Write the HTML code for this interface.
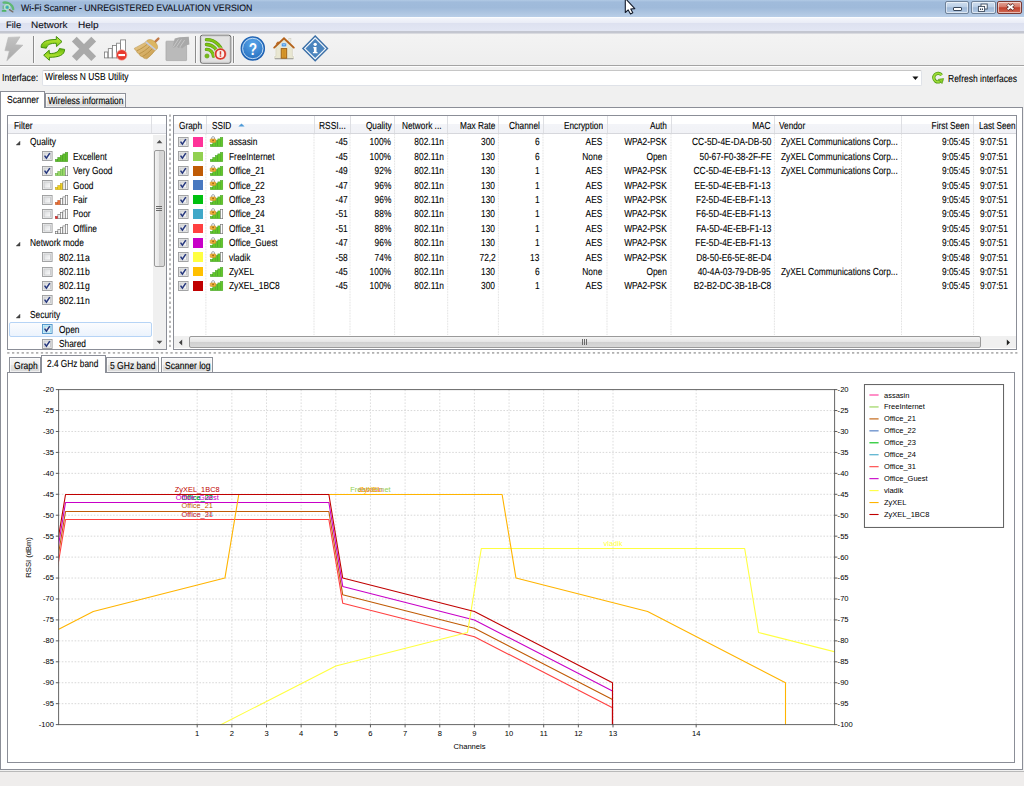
<!DOCTYPE html><html><head><meta charset="utf-8"><title>Wi-Fi Scanner</title><style>
*{box-sizing:border-box;margin:0;padding:0}
html,body{width:1024px;height:786px;overflow:hidden;background:#f0f0f0}
body{position:relative;font-family:"Liberation Sans",sans-serif;font-size:9px;color:#000}
.a{position:absolute}
.t,.tr{-webkit-text-stroke:0.1px currentColor;text-rendering:geometricPrecision}
.t{position:absolute;white-space:pre;line-height:12px;height:12px;transform-origin:0 50%;font-size:9px}
.tr{position:absolute;white-space:pre;line-height:12px;height:12px;transform-origin:100% 50%;font-size:9px;text-align:right}
.c{position:absolute;white-space:pre;line-height:10px;height:10px;font-size:7.5px}
</style></head><body>
<div class="a" style="left:0.00px;top:0.00px;width:1024.00px;height:16.50px;background:linear-gradient(#b2cae5 0%,#a0bbdb 12%,#9fbada 45%,#b9cee7 100%)"></div>
<svg class="a" style="left:1px;top:1px" width="14" height="13" viewBox="0 0 14 13"><path d="M2.6 1.6 C7 1 11.6 3.4 12.2 8.2" fill="none" stroke="#4fb85a" stroke-width="2.3" stroke-linecap="round" opacity=".8"/><path d="M1.6 9.9 h3" stroke="#3fb04e" stroke-width="1.8" stroke-linecap="round" opacity=".85"/><path d="M2.2 4.4 v3.8" stroke="#5ab868" stroke-width="1.3" opacity=".7"/><circle cx="6.2" cy="6.2" r="2.7" fill="#7fd6a0" stroke="#d4ecd8" stroke-width=".9" opacity=".9"/><circle cx="6.2" cy="6.4" r="1.3" fill="#3aa6c0"/><path d="M8.4 8.6 L11.8 10.8" stroke="#7a7068" stroke-width="1.5" stroke-linecap="round"/></svg>
<div class="t" style="left:20.60px;top:2.40px;transform:scaleX(0.936);font-size:9.37px;color:#0b0b14;">Wi-Fi Scanner - UNREGISTERED EVALUATION VERSION</div>
<div class="a" style="left:945.40px;top:1.40px;width:24.00px;height:12.20px;background:linear-gradient(#cfdeef 0%,#bbcfe6 45%,#9fb9d8 52%,#b4cae4 100%);border:.8px solid #6f8299;border-radius:2px;box-shadow:inset 0 0 0 1px rgba(255,255,255,.55)"></div>
<div class="a" style="left:971.40px;top:1.40px;width:24.20px;height:12.20px;background:linear-gradient(#cfdeef 0%,#bbcfe6 45%,#9fb9d8 52%,#b4cae4 100%);border:.8px solid #6f8299;border-radius:2px;box-shadow:inset 0 0 0 1px rgba(255,255,255,.55)"></div>
<div class="a" style="left:997.40px;top:1.40px;width:25.00px;height:12.20px;background:linear-gradient(#e3a496 0%,#d4796a 45%,#c2402c 52%,#cf6a55 100%);border:.8px solid #7a3a34;border-radius:2px;box-shadow:inset 0 0 0 1px rgba(255,255,255,.55)"></div>
<div class="a" style="left:952.80px;top:7.40px;width:8.80px;height:3.20px;background:#fff;border:.8px solid #39475a;border-radius:1px"></div>
<svg class="a" style="left:977px;top:2.6px" width="12" height="10" viewBox="0 0 12 10"><rect x="4" y="1" width="6.2" height="5" fill="#fff" stroke="#39475a" stroke-width=".9"/><rect x="1.4" y="3.4" width="6.2" height="5" fill="#fff" stroke="#39475a" stroke-width=".9"/><rect x="3" y="5.4" width="1.1" height="1.6" fill="#39475a"/><rect x="4.9" y="5.4" width="1.1" height="1.6" fill="#39475a"/></svg>
<svg class="a" style="left:1004.6px;top:3.4px" width="11" height="8" viewBox="0 0 11 8"><path d="M2.4 1.5 L8.6 6.5 M8.6 1.5 L2.4 6.5" stroke="#4a2020" stroke-width="3.2" stroke-linecap="butt"/><path d="M2.6 1.7 L8.4 6.3 M8.4 1.7 L2.6 6.3" stroke="#fff" stroke-width="1.9" stroke-linecap="butt"/></svg>
<svg class="a" style="left:624px;top:0" width="13" height="16" viewBox="0 0 13 16"><path d="M1.3 -1.6 L1.3 12.5 L4.2 9.9 L6.5 13.9 L8.8 12.7 L6.8 9 L10.8 8.6 Z" fill="#fff" stroke="#141c2c" stroke-width="1.1" stroke-linejoin="round"/></svg>
<div class="a" style="left:0.00px;top:16.50px;width:1024.00px;height:1.00px;background:#fbfcfe"></div>
<div class="a" style="left:0.00px;top:17.50px;width:1024.00px;height:5.00px;background:linear-gradient(#f3f5fb,#e9ecf6)"></div>
<div class="a" style="left:0.00px;top:22.50px;width:1024.00px;height:9.00px;background:linear-gradient(#dde1f0,#e3e7f4)"></div>
<div class="a" style="left:0.00px;top:31.30px;width:1024.00px;height:1.50px;background:#c3c6d0"></div>
<div class="a" style="left:0.00px;top:32.80px;width:1024.00px;height:0.90px;background:#d9dadf"></div>
<div class="t" style="left:5.50px;top:19.00px;transform:scaleX(1.009);font-size:9.37px;color:#101020;">File</div>
<div class="t" style="left:31.40px;top:19.00px;transform:scaleX(1.064);font-size:9.37px;color:#101020;">Network</div>
<div class="t" style="left:78.30px;top:19.00px;transform:scaleX(1.073);font-size:9.37px;color:#101020;">Help</div>
<div class="a" style="left:0.00px;top:33.50px;width:1024.00px;height:31.50px;background:linear-gradient(#f3f3f3,#eeeeee)"></div>
<div class="a" style="left:0.00px;top:65.00px;width:1024.00px;height:1.10px;background:#a3a3a3"></div>
<div class="a" style="left:0.00px;top:66.10px;width:1024.00px;height:1.00px;background:#fdfdfd"></div>
<div class="a" style="left:32.60px;top:36.00px;width:1.20px;height:27.00px;background:#8c8c8c"></div>
<div class="a" style="left:33.80px;top:36.00px;width:0.80px;height:27.00px;background:#fafafa"></div>
<div class="a" style="left:194.90px;top:36.00px;width:1.20px;height:27.00px;background:#8c8c8c"></div>
<div class="a" style="left:196.10px;top:36.00px;width:0.80px;height:27.00px;background:#fafafa"></div>
<div class="a" style="left:233.00px;top:36.00px;width:1.20px;height:27.00px;background:#8c8c8c"></div>
<div class="a" style="left:234.20px;top:36.00px;width:0.80px;height:27.00px;background:#fafafa"></div>
<svg class="a" style="left:0;top:33px" width="340" height="32" viewBox="0 33 340 32">
<defs>
<linearGradient id="gl" x1="0" y1="0" x2="0" y2="1"><stop offset="0" stop-color="#c2c2c2"/><stop offset="1" stop-color="#a9a9a9"/></linearGradient>
<linearGradient id="gg" x1="0" y1="0" x2="0" y2="1"><stop offset="0" stop-color="#b8e43a"/><stop offset=".45" stop-color="#a4dc28"/><stop offset="1" stop-color="#66b80e"/></linearGradient>
<radialGradient id="gh" cx=".5" cy=".3" r=".8"><stop offset="0" stop-color="#5aa6ea"/><stop offset="1" stop-color="#1e66b8"/></radialGradient>
<linearGradient id="gb" x1="0" y1="0" x2="1" y2="1"><stop offset="0" stop-color="#e8c98a"/><stop offset="1" stop-color="#c79a4a"/></linearGradient>
</defs>
<path d="M8.3 37.4 L20 36.9 L15.1 44.7 L22.9 45.2 L6.8 60.8 L9.3 51 L4.9 50.6 Z" fill="url(#gl)" stroke="#b8b8b8" stroke-width=".6"/>
<path d="M41.1 47.4 C41.1 41.6 47 39.5 56.3 39.5 L56.3 36.5 L62 41.6 L56.5 46.6 L56.3 43.3 C50.6 43.1 47.4 44.5 46.3 48.2 Z" fill="url(#gg)" stroke="#43900c" stroke-width="1" stroke-linejoin="round"/>
<path d="M41.1 47.4 C41.1 41.6 47 39.5 56.3 39.5 L56.3 36.5 L62 41.6 L56.5 46.6 L56.3 43.3 C50.6 43.1 47.4 44.5 46.3 48.2 Z" fill="url(#gg)" stroke="#43900c" stroke-width="1" stroke-linejoin="round" transform="rotate(180 52.85 48.4)"/>
<path d="M74.3 39.2 L93.7 58.6 M93.7 39.2 L74.3 58.6" stroke="#aaaaaa" stroke-width="6.8" stroke-linecap="butt" stroke-linejoin="round"/>
<rect x="104.4" y="52.0" width="3.4" height="5.9" fill="#fff" stroke="#7a7a7a" stroke-width=".8"/>
<rect x="108.3" y="48.6" width="3.8" height="9.3" fill="#fff" stroke="#7a7a7a" stroke-width=".8"/>
<rect x="112.5" y="45.4" width="3.9" height="12.5" fill="#fff" stroke="#7a7a7a" stroke-width=".8"/>
<rect x="116.6" y="43.2" width="3.8" height="14.7" fill="#fff" stroke="#7a7a7a" stroke-width=".8"/>
<rect x="120.6" y="39.9" width="5.0" height="18.0" fill="#fff" stroke="#7a7a7a" stroke-width=".8"/>
<circle cx="121.7" cy="55" r="5.3" fill="#e8392e" stroke="#f6b0a8" stroke-width=".7"/><rect x="118.4" y="54" width="6.6" height="2.1" fill="#fff"/>
<path d="M154.8 42.2 L158.4 38.6" stroke="#c27a48" stroke-width="2.4" stroke-linecap="round"/>
<path d="M145.3 42.4 C141 44.6 137.4 46.8 134.3 48.3 C134.8 49.8 135.6 50.6 136.6 51 C136.8 52.6 137.8 53.6 139.2 54 C139.6 55.6 140.8 56.6 142.4 56.8 C143.2 58 144.8 58.8 146.9 58.8 C150 56.4 152.8 53.6 155.2 50.4 Z" fill="url(#gb)" stroke="#b08a3c" stroke-width=".5"/>
<path d="M136.6 50.8 C140 49.6 144 47 147.4 44.2 M139.2 53.8 C142.6 52.4 146.4 49.6 149.8 46.4 M142.4 56.6 C145.6 55 149.2 52 152.4 48.6" stroke="#b48c3e" stroke-width=".8" fill="none"/>
<path d="M147.2 40.2 C149.6 38.8 152.6 39.6 154.6 41.6 C157 43.8 158.2 46.2 157.4 48.6 L155.6 50.2 L145.6 42 Z" fill="#dcb663" stroke="#b9934a" stroke-width=".5"/>
<path d="M145.9 42 L155.6 49.8" stroke="#c6cbdc" stroke-width="1.7"/>
<rect x="166" y="41.2" width="20.6" height="19.4" rx=".6" fill="#bababa" stroke="#a9a9a9" stroke-width=".8"/>
<path d="M174.7 38.6 L179.4 37.2 L188.8 36.8 L189.4 44.6 L186.2 45.2 L182 48.4 L180.4 47 L178.4 48 L176.6 46.6 L173.6 47.8 L172.6 46.8 Z" fill="#a9a9a9"/>
<path d="M173.6 46.6 L178.2 39.6 M176.8 46.4 L181.2 39.8 M180.2 46.6 L184.4 40.4" stroke="#c9c9c9" stroke-width=".9" stroke-linecap="round"/>
<rect x="200.4" y="35.2" width="30.4" height="28" rx="2" fill="#e2e2e2" stroke="#666" stroke-width="1"/>
<rect x="201.4" y="36.2" width="28.4" height="26" rx="1.5" fill="none" stroke="#cfcfcf" stroke-width="1"/>
<g fill="none" stroke="#5a9a12" stroke-width="3.3" stroke-linecap="round"><path d="M206.4 49.4 A6.9 6.9 0 0 1 213.4 56.2"/><path d="M206.4 44.5 A11.7 11.7 0 0 1 218.2 56.2"/><path d="M206.4 39.7 A16.5 16.5 0 0 1 223 56.2"/></g>
<g fill="none" stroke="#7fc414" stroke-width="2.2" stroke-linecap="round"><path d="M206.4 49.4 A6.9 6.9 0 0 1 213.4 56.2"/><path d="M206.4 44.5 A11.7 11.7 0 0 1 218.2 56.2"/><path d="M206.4 39.7 A16.5 16.5 0 0 1 223 56.2"/></g>
<circle cx="207" cy="56" r="2.1" fill="#76bc14" stroke="#5a9a12" stroke-width=".6"/>
<circle cx="220.4" cy="54" r="6.1" fill="#d9382c" stroke="#ececec" stroke-width=".6"/><circle cx="220.4" cy="54" r="3.9" fill="#fbefec"/><rect x="219.7" y="51.2" width="1.5" height="3.5" fill="#d8362c"/><rect x="219.7" y="55.4" width="1.5" height="1.4" fill="#d8362c"/>
<circle cx="252.8" cy="48.5" r="11.6" fill="url(#gh)" stroke="#1d5fb0" stroke-width="1.2"/><circle cx="252.8" cy="48.5" r="10.2" fill="none" stroke="#cfe4f8" stroke-width=".9"/>
<text transform="translate(252.9 54.6) scale(.8 1)" text-anchor="middle" font-family="Liberation Sans" font-weight="bold" font-size="17" fill="#fff">?</text>
<path d="M275.8 47 L275.8 56.4 L274.6 56.4 L274.6 58.6 L293.6 58.6 L293.6 56.4 L292.4 56.4 L292.4 47 L284 39.6 Z" fill="#e9e7d2" stroke="#fff" stroke-width="1.6" stroke-linejoin="round"/>
<path d="M275.8 47 L275.8 56.4 L274.6 56.4 L274.6 58.6 L293.6 58.6 L293.6 56.4 L292.4 56.4 L292.4 47 L284 39.6 Z" fill="#e9e7d2" stroke="#c4c1aa" stroke-width=".5"/>
<path d="M274.8 58.8 H293.4" stroke="#8c8c8c" stroke-width=".9"/>
<rect x="288.9" y="38.4" width="2" height="5.2" fill="#f3f2ea" stroke="#c9c6b6" stroke-width=".5"/>
<path d="M276.2 44.4 L277.6 42 L279.4 42.4" fill="#c8742a" stroke="#b9651c" stroke-width="1"/>
<path d="M274.2 47.6 L284 38.4 L293.8 47.6" fill="none" stroke="#b4621a" stroke-width="1.9" stroke-linejoin="miter" stroke-linecap="round"/>
<rect x="281.2" y="48.6" width="5.5" height="9.6" fill="#d8982c" stroke="#9c5c12" stroke-width=".9"/>
<path d="M284 49.4 V57.6" stroke="#c0801e" stroke-width=".6"/>
<rect x="281.5" y="43" width="4.9" height="3.8" rx="1.2" fill="#3f8fe2" stroke="#dbe8f6" stroke-width=".6"/><rect x="282.6" y="44.2" width="2.7" height="1.2" fill="#9cccf6"/>
<path d="M315.2 36.1 L327.5 48.4 L315.2 60.7 L302.9 48.4 Z" fill="#f4f8fc" stroke="#3a6ea6" stroke-width="1.4"/><path d="M315.2 38.7 L324.9 48.4 L315.2 58.1 L305.5 48.4 Z" fill="#4a84be"/>
<circle cx="315.2" cy="44.3" r="1.65" fill="#fff"/><path d="M313.5 46.9 h3 v5 h1 v1.3 h-4.6 v-1.3 h1 v-3.7 h-.8 Z" fill="#fff"/>
</svg>
<div class="t" style="left:2.40px;top:73.35px;transform:scaleX(0.854);font-size:10.17px;">Interface:</div>
<div class="a" style="left:41.60px;top:69.60px;width:880.40px;height:16.80px;background:#fff;border:1px solid #dfe2e8;border-top-color:#c6c6c6;border-radius:2px"></div>
<div class="t" style="left:45.00px;top:72.05px;transform:scaleX(0.832);font-size:10.17px;">Wireless N USB Utility</div>
<svg class="a" style="left:911px;top:75px" width="9" height="6" viewBox="0 0 9 6"><path d="M1.4 1.6 L7.4 1.6 L4.4 4.9 Z" fill="#111"/></svg>
<svg class="a" style="left:931px;top:71px" width="14" height="14" viewBox="0 0 14 14"><path d="M10.6 4.2 A4.3 4.3 0 1 0 10.9 8.6" fill="none" stroke="#4f9a10" stroke-width="3.2"/><path d="M10.6 4.2 A4.3 4.3 0 1 0 10.9 8.6" fill="none" stroke="#9fdc3a" stroke-width="1.8"/><path d="M7.2 8.4 L12.6 7.6 L11 12.6 Z" fill="#8ed02c" stroke="#4f9a10" stroke-width=".7"/></svg>
<div class="t" style="left:947.60px;top:73.95px;transform:scaleX(0.836);font-size:10.17px;">Refresh interfaces</div>
<div class="a" style="left:0.40px;top:107.20px;width:1022.20px;height:662.60px;background:#fff;border:1px solid #8b8e97"></div>
<div class="a" style="left:44.60px;top:93.20px;width:81.80px;height:14.20px;background:linear-gradient(#f7f7f7 0%,#efefef 50%,#e3e3e3 50%,#d9d9d9 100%);border:1px solid #8e9199;border-bottom:none;box-shadow:inset 0 0 0 .8px rgba(255,255,255,.8)"></div>
<div class="t" style="left:48.40px;top:96.15px;transform:scaleX(0.819);font-size:10.17px;">Wireless information</div>
<div class="a" style="left:0.20px;top:91.40px;width:44.40px;height:16.60px;background:#fff;border:1px solid #8b8e97;border-bottom:none"></div>
<div class="t" style="left:6.70px;top:94.55px;transform:scaleX(0.845);font-size:10.17px;">Scanner</div>
<div class="a" style="left:7.00px;top:114.50px;width:160.00px;height:235.00px;background:#fff;border:1px solid #8b8e97"></div>
<div class="a" style="left:8.00px;top:115.50px;width:158.00px;height:18.00px;background:linear-gradient(#ffffff 0%,#ffffff 45%,#f3f4f8 50%,#f1f2f6 100%);border-bottom:1px solid #d6d7dc"></div>
<div class="a" style="left:150.60px;top:115.50px;width:0.90px;height:17.00px;background:#dedfe3"></div>
<div class="t" style="left:13.80px;top:120.75px;transform:scaleX(0.823);font-size:10.17px;">Filter</div>
<svg class="a" style="left:15px;top:140.20px" width="6" height="6" viewBox="0 0 6 6"><path d="M5 1.2 L5 5 L1.2 5 Z" fill="#484848" stroke="#303030" stroke-width=".4"/></svg>
<div class="t" style="left:29.60px;top:137.15px;transform:scaleX(0.823);font-size:10.17px;">Quality</div>
<svg class="a" style="left:41.70px;top:151.40px" width="11" height="10.4" viewBox="0 0 11 10.4"><rect x=".5" y=".5" width="9.6" height="9" fill="#f4f4f4" stroke="#9a9b9c" stroke-width=".9"/><rect x="2" y="2" width="6.6" height="6" fill="#e4e5e6" stroke="#c2c4c6" stroke-width=".8"/><rect x="3" y="3" width="5" height="4.4" fill="url(#ckg)"/><defs><linearGradient id="ckg" x1="0" y1="0" x2="1" y2="1"><stop offset="0" stop-color="#dcdee0"/><stop offset="1" stop-color="#fbfbfb"/></linearGradient></defs>
<path d="M2.6 4.6 L4.4 7.2 L7.8 2.2" fill="none" stroke="#26387e" stroke-width="1.5" stroke-linejoin="miter"/>
</svg>
<svg class="a" style="left:55.00px;top:151.60px;overflow:visible" width="13" height="10" viewBox="0 0 13 10"><rect x="0.30" y="7.40" width="2.5" height="2.30" fill="#5fbf2a" stroke="#3c8f1c" stroke-width=".45"/><rect x="2.80" y="5.40" width="2.5" height="4.30" fill="#5fbf2a" stroke="#3c8f1c" stroke-width=".45"/><rect x="5.30" y="3.50" width="2.5" height="6.20" fill="#5fbf2a" stroke="#3c8f1c" stroke-width=".45"/><rect x="7.80" y="1.90" width="2.5" height="7.80" fill="#5fbf2a" stroke="#3c8f1c" stroke-width=".45"/><rect x="10.30" y="0.40" width="2.5" height="9.30" fill="#5fbf2a" stroke="#3c8f1c" stroke-width=".45"/></svg>
<div class="t" style="left:73.00px;top:151.75px;transform:scaleX(0.823);font-size:10.17px;">Excellent</div>
<svg class="a" style="left:41.70px;top:165.80px" width="11" height="10.4" viewBox="0 0 11 10.4"><rect x=".5" y=".5" width="9.6" height="9" fill="#f4f4f4" stroke="#9a9b9c" stroke-width=".9"/><rect x="2" y="2" width="6.6" height="6" fill="#e4e5e6" stroke="#c2c4c6" stroke-width=".8"/><rect x="3" y="3" width="5" height="4.4" fill="url(#ckg)"/><defs><linearGradient id="ckg" x1="0" y1="0" x2="1" y2="1"><stop offset="0" stop-color="#dcdee0"/><stop offset="1" stop-color="#fbfbfb"/></linearGradient></defs>
<path d="M2.6 4.6 L4.4 7.2 L7.8 2.2" fill="none" stroke="#26387e" stroke-width="1.5" stroke-linejoin="miter"/>
</svg>
<svg class="a" style="left:55.00px;top:166.00px;overflow:visible" width="13" height="10" viewBox="0 0 13 10"><rect x="0.30" y="7.40" width="2.5" height="2.30" fill="#9ad86a" stroke="#5aa83a" stroke-width=".45"/><rect x="2.80" y="5.40" width="2.5" height="4.30" fill="#9ad86a" stroke="#5aa83a" stroke-width=".45"/><rect x="5.30" y="3.50" width="2.5" height="6.20" fill="#9ad86a" stroke="#5aa83a" stroke-width=".45"/><rect x="7.80" y="1.90" width="2.5" height="7.80" fill="#9ad86a" stroke="#5aa83a" stroke-width=".45"/><rect x="10.40" y="0.40" width="2.3" height="9.30" fill="#fdfdfd" stroke="#6e6e6e" stroke-width=".6"/></svg>
<div class="t" style="left:73.00px;top:166.15px;transform:scaleX(0.823);font-size:10.17px;">Very Good</div>
<svg class="a" style="left:41.70px;top:180.20px" width="11" height="10.4" viewBox="0 0 11 10.4"><rect x=".5" y=".5" width="9.6" height="9" fill="#f4f4f4" stroke="#9a9b9c" stroke-width=".9"/><rect x="2" y="2" width="6.6" height="6" fill="#e4e5e6" stroke="#c2c4c6" stroke-width=".8"/><rect x="3" y="3" width="5" height="4.4" fill="url(#ckg)"/><defs><linearGradient id="ckg" x1="0" y1="0" x2="1" y2="1"><stop offset="0" stop-color="#dcdee0"/><stop offset="1" stop-color="#fbfbfb"/></linearGradient></defs>
</svg>
<svg class="a" style="left:55.00px;top:180.40px;overflow:visible" width="13" height="10" viewBox="0 0 13 10"><rect x="0.30" y="7.40" width="2.5" height="2.30" fill="#f0d020" stroke="#b89a10" stroke-width=".45"/><rect x="2.80" y="5.40" width="2.5" height="4.30" fill="#f0d020" stroke="#b89a10" stroke-width=".45"/><rect x="5.30" y="3.50" width="2.5" height="6.20" fill="#f0d020" stroke="#b89a10" stroke-width=".45"/><rect x="7.90" y="1.90" width="2.3" height="7.80" fill="#fdfdfd" stroke="#6e6e6e" stroke-width=".6"/><rect x="10.40" y="0.40" width="2.3" height="9.30" fill="#fdfdfd" stroke="#6e6e6e" stroke-width=".6"/></svg>
<div class="t" style="left:73.00px;top:180.55px;transform:scaleX(0.823);font-size:10.17px;">Good</div>
<svg class="a" style="left:41.70px;top:194.60px" width="11" height="10.4" viewBox="0 0 11 10.4"><rect x=".5" y=".5" width="9.6" height="9" fill="#f4f4f4" stroke="#9a9b9c" stroke-width=".9"/><rect x="2" y="2" width="6.6" height="6" fill="#e4e5e6" stroke="#c2c4c6" stroke-width=".8"/><rect x="3" y="3" width="5" height="4.4" fill="url(#ckg)"/><defs><linearGradient id="ckg" x1="0" y1="0" x2="1" y2="1"><stop offset="0" stop-color="#dcdee0"/><stop offset="1" stop-color="#fbfbfb"/></linearGradient></defs>
</svg>
<svg class="a" style="left:55.00px;top:194.80px;overflow:visible" width="13" height="10" viewBox="0 0 13 10"><rect x="0.30" y="7.40" width="2.5" height="2.30" fill="#e8703a" stroke="#b8501c" stroke-width=".45"/><rect x="2.80" y="5.40" width="2.5" height="4.30" fill="#e8703a" stroke="#b8501c" stroke-width=".45"/><rect x="5.40" y="3.50" width="2.3" height="6.20" fill="#fdfdfd" stroke="#6e6e6e" stroke-width=".6"/><rect x="7.90" y="1.90" width="2.3" height="7.80" fill="#fdfdfd" stroke="#6e6e6e" stroke-width=".6"/><rect x="10.40" y="0.40" width="2.3" height="9.30" fill="#fdfdfd" stroke="#6e6e6e" stroke-width=".6"/></svg>
<div class="t" style="left:73.00px;top:194.95px;transform:scaleX(0.823);font-size:10.17px;">Fair</div>
<svg class="a" style="left:41.70px;top:209.00px" width="11" height="10.4" viewBox="0 0 11 10.4"><rect x=".5" y=".5" width="9.6" height="9" fill="#f4f4f4" stroke="#9a9b9c" stroke-width=".9"/><rect x="2" y="2" width="6.6" height="6" fill="#e4e5e6" stroke="#c2c4c6" stroke-width=".8"/><rect x="3" y="3" width="5" height="4.4" fill="url(#ckg)"/><defs><linearGradient id="ckg" x1="0" y1="0" x2="1" y2="1"><stop offset="0" stop-color="#dcdee0"/><stop offset="1" stop-color="#fbfbfb"/></linearGradient></defs>
</svg>
<svg class="a" style="left:55.00px;top:209.20px;overflow:visible" width="13" height="10" viewBox="0 0 13 10"><rect x="0.30" y="7.40" width="2.5" height="2.30" fill="#e03030" stroke="#a81c1c" stroke-width=".45"/><rect x="2.90" y="5.40" width="2.3" height="4.30" fill="#fdfdfd" stroke="#6e6e6e" stroke-width=".6"/><rect x="5.40" y="3.50" width="2.3" height="6.20" fill="#fdfdfd" stroke="#6e6e6e" stroke-width=".6"/><rect x="7.90" y="1.90" width="2.3" height="7.80" fill="#fdfdfd" stroke="#6e6e6e" stroke-width=".6"/><rect x="10.40" y="0.40" width="2.3" height="9.30" fill="#fdfdfd" stroke="#6e6e6e" stroke-width=".6"/></svg>
<div class="t" style="left:73.00px;top:209.35px;transform:scaleX(0.823);font-size:10.17px;">Poor</div>
<svg class="a" style="left:41.70px;top:223.40px" width="11" height="10.4" viewBox="0 0 11 10.4"><rect x=".5" y=".5" width="9.6" height="9" fill="#f4f4f4" stroke="#9a9b9c" stroke-width=".9"/><rect x="2" y="2" width="6.6" height="6" fill="#e4e5e6" stroke="#c2c4c6" stroke-width=".8"/><rect x="3" y="3" width="5" height="4.4" fill="url(#ckg)"/><defs><linearGradient id="ckg" x1="0" y1="0" x2="1" y2="1"><stop offset="0" stop-color="#dcdee0"/><stop offset="1" stop-color="#fbfbfb"/></linearGradient></defs>
</svg>
<svg class="a" style="left:55.00px;top:223.60px;overflow:visible" width="13" height="10" viewBox="0 0 13 10"><rect x="0.40" y="7.40" width="2.3" height="2.30" fill="#fdfdfd" stroke="#6e6e6e" stroke-width=".6"/><rect x="2.90" y="5.40" width="2.3" height="4.30" fill="#fdfdfd" stroke="#6e6e6e" stroke-width=".6"/><rect x="5.40" y="3.50" width="2.3" height="6.20" fill="#fdfdfd" stroke="#6e6e6e" stroke-width=".6"/><rect x="7.90" y="1.90" width="2.3" height="7.80" fill="#fdfdfd" stroke="#6e6e6e" stroke-width=".6"/><rect x="10.40" y="0.40" width="2.3" height="9.30" fill="#fdfdfd" stroke="#6e6e6e" stroke-width=".6"/></svg>
<div class="t" style="left:73.00px;top:223.75px;transform:scaleX(0.823);font-size:10.17px;">Offline</div>
<svg class="a" style="left:15px;top:241.00px" width="6" height="6" viewBox="0 0 6 6"><path d="M5 1.2 L5 5 L1.2 5 Z" fill="#484848" stroke="#303030" stroke-width=".4"/></svg>
<div class="t" style="left:29.60px;top:237.95px;transform:scaleX(0.823);font-size:10.17px;">Network mode</div>
<svg class="a" style="left:41.70px;top:252.20px" width="11" height="10.4" viewBox="0 0 11 10.4"><rect x=".5" y=".5" width="9.6" height="9" fill="#f4f4f4" stroke="#9a9b9c" stroke-width=".9"/><rect x="2" y="2" width="6.6" height="6" fill="#e4e5e6" stroke="#c2c4c6" stroke-width=".8"/><rect x="3" y="3" width="5" height="4.4" fill="url(#ckg)"/><defs><linearGradient id="ckg" x1="0" y1="0" x2="1" y2="1"><stop offset="0" stop-color="#dcdee0"/><stop offset="1" stop-color="#fbfbfb"/></linearGradient></defs>
</svg>
<div class="t" style="left:58.60px;top:252.55px;transform:scaleX(0.854);font-size:10.17px;">802.11a</div>
<svg class="a" style="left:41.70px;top:266.60px" width="11" height="10.4" viewBox="0 0 11 10.4"><rect x=".5" y=".5" width="9.6" height="9" fill="#f4f4f4" stroke="#9a9b9c" stroke-width=".9"/><rect x="2" y="2" width="6.6" height="6" fill="#e4e5e6" stroke="#c2c4c6" stroke-width=".8"/><rect x="3" y="3" width="5" height="4.4" fill="url(#ckg)"/><defs><linearGradient id="ckg" x1="0" y1="0" x2="1" y2="1"><stop offset="0" stop-color="#dcdee0"/><stop offset="1" stop-color="#fbfbfb"/></linearGradient></defs>
</svg>
<div class="t" style="left:58.60px;top:266.95px;transform:scaleX(0.854);font-size:10.17px;">802.11b</div>
<svg class="a" style="left:41.70px;top:281.00px" width="11" height="10.4" viewBox="0 0 11 10.4"><rect x=".5" y=".5" width="9.6" height="9" fill="#f4f4f4" stroke="#9a9b9c" stroke-width=".9"/><rect x="2" y="2" width="6.6" height="6" fill="#e4e5e6" stroke="#c2c4c6" stroke-width=".8"/><rect x="3" y="3" width="5" height="4.4" fill="url(#ckg)"/><defs><linearGradient id="ckg" x1="0" y1="0" x2="1" y2="1"><stop offset="0" stop-color="#dcdee0"/><stop offset="1" stop-color="#fbfbfb"/></linearGradient></defs>
<path d="M2.6 4.6 L4.4 7.2 L7.8 2.2" fill="none" stroke="#26387e" stroke-width="1.5" stroke-linejoin="miter"/>
</svg>
<div class="t" style="left:58.60px;top:281.35px;transform:scaleX(0.854);font-size:10.17px;">802.11g</div>
<svg class="a" style="left:41.70px;top:295.40px" width="11" height="10.4" viewBox="0 0 11 10.4"><rect x=".5" y=".5" width="9.6" height="9" fill="#f4f4f4" stroke="#9a9b9c" stroke-width=".9"/><rect x="2" y="2" width="6.6" height="6" fill="#e4e5e6" stroke="#c2c4c6" stroke-width=".8"/><rect x="3" y="3" width="5" height="4.4" fill="url(#ckg)"/><defs><linearGradient id="ckg" x1="0" y1="0" x2="1" y2="1"><stop offset="0" stop-color="#dcdee0"/><stop offset="1" stop-color="#fbfbfb"/></linearGradient></defs>
<path d="M2.6 4.6 L4.4 7.2 L7.8 2.2" fill="none" stroke="#26387e" stroke-width="1.5" stroke-linejoin="miter"/>
</svg>
<div class="t" style="left:58.60px;top:295.75px;transform:scaleX(0.854);font-size:10.17px;">802.11n</div>
<svg class="a" style="left:15px;top:313.00px" width="6" height="6" viewBox="0 0 6 6"><path d="M5 1.2 L5 5 L1.2 5 Z" fill="#484848" stroke="#303030" stroke-width=".4"/></svg>
<div class="t" style="left:29.60px;top:309.95px;transform:scaleX(0.823);font-size:10.17px;">Security</div>
<div class="a" style="left:9.20px;top:322.40px;width:142.60px;height:14.20px;background:linear-gradient(#fbfcfe,#ebf3fd);border:1px solid #b6d4f6;border-radius:2px"></div>
<svg class="a" style="left:41.70px;top:324.20px" width="11" height="10.4" viewBox="0 0 11 10.4"><rect x=".5" y=".5" width="9.6" height="9" fill="#def6fb" stroke="#4a90c8" stroke-width=".9"/><rect x="2" y="2" width="6.6" height="6" fill="#c8ecf8" stroke="#8fd0ec" stroke-width=".8"/><rect x="3" y="3" width="5" height="4.4" fill="url(#ckg)"/><defs><linearGradient id="ckg" x1="0" y1="0" x2="1" y2="1"><stop offset="0" stop-color="#dcdee0"/><stop offset="1" stop-color="#fbfbfb"/></linearGradient></defs>
<path d="M2.6 4.6 L4.4 7.2 L7.8 2.2" fill="none" stroke="#26387e" stroke-width="1.5" stroke-linejoin="miter"/>
</svg>
<div class="t" style="left:58.60px;top:324.55px;transform:scaleX(0.823);font-size:10.17px;">Open</div>
<svg class="a" style="left:41.70px;top:338.60px" width="11" height="10.4" viewBox="0 0 11 10.4"><rect x=".5" y=".5" width="9.6" height="9" fill="#f4f4f4" stroke="#9a9b9c" stroke-width=".9"/><rect x="2" y="2" width="6.6" height="6" fill="#e4e5e6" stroke="#c2c4c6" stroke-width=".8"/><rect x="3" y="3" width="5" height="4.4" fill="url(#ckg)"/><defs><linearGradient id="ckg" x1="0" y1="0" x2="1" y2="1"><stop offset="0" stop-color="#dcdee0"/><stop offset="1" stop-color="#fbfbfb"/></linearGradient></defs>
<path d="M2.6 4.6 L4.4 7.2 L7.8 2.2" fill="none" stroke="#26387e" stroke-width="1.5" stroke-linejoin="miter"/>
</svg>
<div class="t" style="left:58.60px;top:338.95px;transform:scaleX(0.823);font-size:10.17px;">Shared</div>
<div class="a" style="left:8.00px;top:348.50px;width:150.00px;height:0.10px;"></div>
<div class="a" style="left:153.00px;top:134.50px;width:13.00px;height:214.00px;background:#f0f0f0"></div>
<svg class="a" style="left:156px;top:139px" width="7" height="5" viewBox="0 0 7 5"><path d="M.6 4.2 L3.5 1 L6.4 4.2 Z" fill="#505050"/></svg>
<svg class="a" style="left:156px;top:339.6px" width="7" height="5" viewBox="0 0 7 5"><path d="M.6 .8 L3.5 4 L6.4 .8 Z" fill="#505050"/></svg>
<div class="a" style="left:153.80px;top:149.60px;width:10.80px;height:117.60px;background:linear-gradient(90deg,#f2f2f2 0%,#e6e6e6 45%,#d2d2d2 50%,#dadada 100%);border:1px solid #9a9a9a;border-radius:2px"></div>
<div class="a" style="left:156.40px;top:205.80px;width:5.40px;height:0.90px;background:#6a6a6a"></div>
<div class="a" style="left:156.40px;top:208.00px;width:5.40px;height:0.90px;background:#6a6a6a"></div>
<div class="a" style="left:156.40px;top:210.20px;width:5.40px;height:0.90px;background:#6a6a6a"></div>
<svg class="a" style="left:168px;top:114px" width="4" height="236" viewBox="0 0 4 236"><path d="M2 0.4 V235.4" stroke="#b0b0b0" stroke-width="1.8" stroke-dasharray="2.3 2.5"/></svg>
<div class="a" style="left:172.90px;top:114.50px;width:844.20px;height:235.00px;background:#fff;border:1px solid #8b8e97"></div>
<div class="a" style="left:173.90px;top:115.50px;width:842.20px;height:18.00px;background:linear-gradient(#ffffff 0%,#ffffff 45%,#f3f4f8 50%,#f1f2f6 100%);border-bottom:1px solid #d6d7dc"></div>
<div class="a" style="left:205.50px;top:115.50px;width:0.90px;height:17.00px;background:#dedfe3"></div>
<div class="a" style="left:313.60px;top:115.50px;width:0.90px;height:17.00px;background:#dedfe3"></div>
<div class="a" style="left:349.60px;top:115.50px;width:0.90px;height:17.00px;background:#dedfe3"></div>
<div class="a" style="left:394.20px;top:115.50px;width:0.90px;height:17.00px;background:#dedfe3"></div>
<div class="a" style="left:447.30px;top:115.50px;width:0.90px;height:17.00px;background:#dedfe3"></div>
<div class="a" style="left:498.00px;top:115.50px;width:0.90px;height:17.00px;background:#dedfe3"></div>
<div class="a" style="left:542.60px;top:115.50px;width:0.90px;height:17.00px;background:#dedfe3"></div>
<div class="a" style="left:606.60px;top:115.50px;width:0.90px;height:17.00px;background:#dedfe3"></div>
<div class="a" style="left:670.60px;top:115.50px;width:0.90px;height:17.00px;background:#dedfe3"></div>
<div class="a" style="left:774.00px;top:115.50px;width:0.90px;height:17.00px;background:#dedfe3"></div>
<div class="a" style="left:901.10px;top:115.50px;width:0.90px;height:17.00px;background:#dedfe3"></div>
<div class="a" style="left:973.20px;top:115.50px;width:0.90px;height:17.00px;background:#dedfe3"></div>
<svg class="a" style="left:0;top:134px" width="1016" height="202" viewBox="0 134 1016 202"><path d="M205.90 134 V335.5" stroke="#d8d8d8" stroke-width=".9" stroke-dasharray="0.8 0.8"/><path d="M314.00 134 V335.5" stroke="#d8d8d8" stroke-width=".9" stroke-dasharray="0.8 0.8"/><path d="M350.00 134 V335.5" stroke="#d8d8d8" stroke-width=".9" stroke-dasharray="0.8 0.8"/><path d="M394.60 134 V335.5" stroke="#d8d8d8" stroke-width=".9" stroke-dasharray="0.8 0.8"/><path d="M447.70 134 V335.5" stroke="#d8d8d8" stroke-width=".9" stroke-dasharray="0.8 0.8"/><path d="M498.40 134 V335.5" stroke="#d8d8d8" stroke-width=".9" stroke-dasharray="0.8 0.8"/><path d="M543.00 134 V335.5" stroke="#d8d8d8" stroke-width=".9" stroke-dasharray="0.8 0.8"/><path d="M607.00 134 V335.5" stroke="#d8d8d8" stroke-width=".9" stroke-dasharray="0.8 0.8"/><path d="M671.00 134 V335.5" stroke="#d8d8d8" stroke-width=".9" stroke-dasharray="0.8 0.8"/><path d="M774.40 134 V335.5" stroke="#d8d8d8" stroke-width=".9" stroke-dasharray="0.8 0.8"/><path d="M901.50 134 V335.5" stroke="#d8d8d8" stroke-width=".9" stroke-dasharray="0.8 0.8"/><path d="M973.60 134 V335.5" stroke="#d8d8d8" stroke-width=".9" stroke-dasharray="0.8 0.8"/></svg>
<div class="t" style="left:179.40px;top:120.75px;transform:scaleX(0.814);font-size:10.17px;">Graph</div>
<div class="t" style="left:212.30px;top:120.75px;transform:scaleX(0.814);font-size:10.17px;">SSID</div>
<svg class="a" style="left:238.4px;top:123px" width="7" height="4" viewBox="0 0 7 4"><path d="M.4 3.6 L3.5 .6 L6.6 3.6 Z" fill="#4f9bd8"/></svg>
<div class="t" style="left:319.40px;top:120.75px;transform:scaleX(0.832);font-size:10.17px;">RSSI...</div>
<div class="tr" style="right:632.80px;top:120.75px;transform:scaleX(0.814);font-size:10.17px;">Quality</div>
<div class="t" style="left:401.60px;top:120.75px;transform:scaleX(0.814);font-size:10.17px;">Network ...</div>
<div class="tr" style="right:528.60px;top:120.75px;transform:scaleX(0.814);font-size:10.17px;">Max Rate</div>
<div class="tr" style="right:484.60px;top:120.75px;transform:scaleX(0.814);font-size:10.17px;">Channel</div>
<div class="tr" style="right:421.40px;top:120.75px;transform:scaleX(0.814);font-size:10.17px;">Encryption</div>
<div class="tr" style="right:356.80px;top:120.75px;transform:scaleX(0.814);font-size:10.17px;">Auth</div>
<div class="tr" style="right:253.00px;top:120.75px;transform:scaleX(0.814);font-size:10.17px;">MAC</div>
<div class="t" style="left:779.20px;top:120.75px;transform:scaleX(0.814);font-size:10.17px;">Vendor</div>
<div class="tr" style="right:54.60px;top:120.75px;transform:scaleX(0.814);font-size:10.17px;">First Seen</div>
<div class="a" style="left:975px;top:116px;width:41px;height:17px;overflow:hidden"><div class="t" style="left:3.6px;top:4.75px;transform:scaleX(.80);font-size:10.17px">Last Seen</div></div>
<svg class="a" style="left:178.20px;top:137.00px" width="11" height="10.4" viewBox="0 0 11 10.4"><rect x=".5" y=".5" width="9.6" height="9" fill="#f4f4f4" stroke="#9a9b9c" stroke-width=".9"/><rect x="2" y="2" width="6.6" height="6" fill="#e4e5e6" stroke="#c2c4c6" stroke-width=".8"/><rect x="3" y="3" width="5" height="4.4" fill="url(#ckg)"/><defs><linearGradient id="ckg" x1="0" y1="0" x2="1" y2="1"><stop offset="0" stop-color="#dcdee0"/><stop offset="1" stop-color="#fbfbfb"/></linearGradient></defs>
<path d="M2.6 4.6 L4.4 7.2 L7.8 2.2" fill="none" stroke="#26387e" stroke-width="1.5" stroke-linejoin="miter"/>
</svg>
<div class="a" style="left:193.00px;top:137.10px;width:9.80px;height:9.80px;background:#ff3399"></div>
<svg class="a" style="left:210.20px;top:137.10px;overflow:visible" width="13" height="10" viewBox="0 0 13 10"><rect x="0.30" y="7.40" width="2.5" height="2.30" fill="#62c828" stroke="#3f9a22" stroke-width=".45"/><rect x="2.80" y="5.40" width="2.5" height="4.30" fill="#62c828" stroke="#3f9a22" stroke-width=".45"/><rect x="5.30" y="3.50" width="2.5" height="6.20" fill="#62c828" stroke="#3f9a22" stroke-width=".45"/><rect x="7.80" y="1.90" width="2.5" height="7.80" fill="#62c828" stroke="#3f9a22" stroke-width=".45"/><rect x="10.30" y="0.40" width="2.5" height="9.30" fill="#62c828" stroke="#3f9a22" stroke-width=".45"/><path d="M1.7 2.2 v-1.2 a1.4 1.4 0 0 1 2.8 0 v1.2" fill="none" stroke="#9aa0a8" stroke-width=".9"/><rect x=".2" y="1.9" width="5.6" height="3.5" rx=".7" fill="#f2b03a" stroke="#c98a1c" stroke-width=".5"/><rect x="2.5" y="2.7" width="1.1" height="1.5" fill="#6a4208"/></svg>
<div class="t" style="left:228.50px;top:137.45px;transform:scaleX(0.823);font-size:10.17px;">assasin</div>
<div class="tr" style="right:676.60px;top:137.45px;transform:scaleX(0.823);font-size:10.17px;">-45</div>
<div class="tr" style="right:632.80px;top:137.45px;transform:scaleX(0.823);font-size:10.17px;">100%</div>
<div class="tr" style="right:579.80px;top:137.45px;transform:scaleX(0.823);font-size:10.17px;">802.11n</div>
<div class="tr" style="right:528.60px;top:137.45px;transform:scaleX(0.823);font-size:10.17px;">300</div>
<div class="tr" style="right:484.60px;top:137.45px;transform:scaleX(0.823);font-size:10.17px;">6</div>
<div class="tr" style="right:421.40px;top:137.45px;transform:scaleX(0.823);font-size:10.17px;">AES</div>
<div class="tr" style="right:356.80px;top:137.45px;transform:scaleX(0.823);font-size:10.17px;">WPA2-PSK</div>
<div class="tr" style="right:253.00px;top:137.45px;transform:scaleX(0.823);font-size:10.17px;">CC-5D-4E-DA-DB-50</div>
<div class="t" style="left:780.80px;top:137.45px;transform:scaleX(0.823);font-size:10.17px;">ZyXEL Communications Corp...</div>
<div class="tr" style="right:54.60px;top:137.45px;transform:scaleX(0.823);font-size:10.17px;">9:05:45</div>
<div class="t" style="left:980.40px;top:137.45px;transform:scaleX(0.823);font-size:10.17px;">9:07:51</div>
<svg class="a" style="left:178.20px;top:151.40px" width="11" height="10.4" viewBox="0 0 11 10.4"><rect x=".5" y=".5" width="9.6" height="9" fill="#f4f4f4" stroke="#9a9b9c" stroke-width=".9"/><rect x="2" y="2" width="6.6" height="6" fill="#e4e5e6" stroke="#c2c4c6" stroke-width=".8"/><rect x="3" y="3" width="5" height="4.4" fill="url(#ckg)"/><defs><linearGradient id="ckg" x1="0" y1="0" x2="1" y2="1"><stop offset="0" stop-color="#dcdee0"/><stop offset="1" stop-color="#fbfbfb"/></linearGradient></defs>
<path d="M2.6 4.6 L4.4 7.2 L7.8 2.2" fill="none" stroke="#26387e" stroke-width="1.5" stroke-linejoin="miter"/>
</svg>
<div class="a" style="left:193.00px;top:151.50px;width:9.80px;height:9.80px;background:#92d050"></div>
<svg class="a" style="left:210.20px;top:151.50px;overflow:visible" width="13" height="10" viewBox="0 0 13 10"><rect x="0.30" y="7.40" width="2.5" height="2.30" fill="#62c828" stroke="#3f9a22" stroke-width=".45"/><rect x="2.80" y="5.40" width="2.5" height="4.30" fill="#62c828" stroke="#3f9a22" stroke-width=".45"/><rect x="5.30" y="3.50" width="2.5" height="6.20" fill="#62c828" stroke="#3f9a22" stroke-width=".45"/><rect x="7.80" y="1.90" width="2.5" height="7.80" fill="#62c828" stroke="#3f9a22" stroke-width=".45"/><rect x="10.30" y="0.40" width="2.5" height="9.30" fill="#62c828" stroke="#3f9a22" stroke-width=".45"/></svg>
<div class="t" style="left:228.50px;top:151.85px;transform:scaleX(0.823);font-size:10.17px;">FreeInternet</div>
<div class="tr" style="right:676.60px;top:151.85px;transform:scaleX(0.823);font-size:10.17px;">-45</div>
<div class="tr" style="right:632.80px;top:151.85px;transform:scaleX(0.823);font-size:10.17px;">100%</div>
<div class="tr" style="right:579.80px;top:151.85px;transform:scaleX(0.823);font-size:10.17px;">802.11n</div>
<div class="tr" style="right:528.60px;top:151.85px;transform:scaleX(0.823);font-size:10.17px;">130</div>
<div class="tr" style="right:484.60px;top:151.85px;transform:scaleX(0.823);font-size:10.17px;">6</div>
<div class="tr" style="right:421.40px;top:151.85px;transform:scaleX(0.823);font-size:10.17px;">None</div>
<div class="tr" style="right:356.80px;top:151.85px;transform:scaleX(0.823);font-size:10.17px;">Open</div>
<div class="tr" style="right:253.00px;top:151.85px;transform:scaleX(0.823);font-size:10.17px;">50-67-F0-38-2F-FE</div>
<div class="t" style="left:780.80px;top:151.85px;transform:scaleX(0.823);font-size:10.17px;">ZyXEL Communications Corp...</div>
<div class="tr" style="right:54.60px;top:151.85px;transform:scaleX(0.823);font-size:10.17px;">9:05:45</div>
<div class="t" style="left:980.40px;top:151.85px;transform:scaleX(0.823);font-size:10.17px;">9:07:51</div>
<svg class="a" style="left:178.20px;top:165.80px" width="11" height="10.4" viewBox="0 0 11 10.4"><rect x=".5" y=".5" width="9.6" height="9" fill="#f4f4f4" stroke="#9a9b9c" stroke-width=".9"/><rect x="2" y="2" width="6.6" height="6" fill="#e4e5e6" stroke="#c2c4c6" stroke-width=".8"/><rect x="3" y="3" width="5" height="4.4" fill="url(#ckg)"/><defs><linearGradient id="ckg" x1="0" y1="0" x2="1" y2="1"><stop offset="0" stop-color="#dcdee0"/><stop offset="1" stop-color="#fbfbfb"/></linearGradient></defs>
<path d="M2.6 4.6 L4.4 7.2 L7.8 2.2" fill="none" stroke="#26387e" stroke-width="1.5" stroke-linejoin="miter"/>
</svg>
<div class="a" style="left:193.00px;top:165.90px;width:9.80px;height:9.80px;background:#bf5b05"></div>
<svg class="a" style="left:210.20px;top:165.90px;overflow:visible" width="13" height="10" viewBox="0 0 13 10"><rect x="0.30" y="7.40" width="2.5" height="2.30" fill="#62c828" stroke="#3f9a22" stroke-width=".45"/><rect x="2.80" y="5.40" width="2.5" height="4.30" fill="#62c828" stroke="#3f9a22" stroke-width=".45"/><rect x="5.30" y="3.50" width="2.5" height="6.20" fill="#62c828" stroke="#3f9a22" stroke-width=".45"/><rect x="7.80" y="1.90" width="2.5" height="7.80" fill="#62c828" stroke="#3f9a22" stroke-width=".45"/><rect x="10.30" y="0.40" width="2.5" height="9.30" fill="#62c828" stroke="#3f9a22" stroke-width=".45"/><path d="M1.7 2.2 v-1.2 a1.4 1.4 0 0 1 2.8 0 v1.2" fill="none" stroke="#9aa0a8" stroke-width=".9"/><rect x=".2" y="1.9" width="5.6" height="3.5" rx=".7" fill="#f2b03a" stroke="#c98a1c" stroke-width=".5"/><rect x="2.5" y="2.7" width="1.1" height="1.5" fill="#6a4208"/></svg>
<div class="t" style="left:228.50px;top:166.25px;transform:scaleX(0.823);font-size:10.17px;">Office_21</div>
<div class="tr" style="right:676.60px;top:166.25px;transform:scaleX(0.823);font-size:10.17px;">-49</div>
<div class="tr" style="right:632.80px;top:166.25px;transform:scaleX(0.823);font-size:10.17px;">92%</div>
<div class="tr" style="right:579.80px;top:166.25px;transform:scaleX(0.823);font-size:10.17px;">802.11n</div>
<div class="tr" style="right:528.60px;top:166.25px;transform:scaleX(0.823);font-size:10.17px;">130</div>
<div class="tr" style="right:484.60px;top:166.25px;transform:scaleX(0.823);font-size:10.17px;">1</div>
<div class="tr" style="right:421.40px;top:166.25px;transform:scaleX(0.823);font-size:10.17px;">AES</div>
<div class="tr" style="right:356.80px;top:166.25px;transform:scaleX(0.823);font-size:10.17px;">WPA2-PSK</div>
<div class="tr" style="right:253.00px;top:166.25px;transform:scaleX(0.823);font-size:10.17px;">CC-5D-4E-EB-F1-13</div>
<div class="t" style="left:780.80px;top:166.25px;transform:scaleX(0.823);font-size:10.17px;">ZyXEL Communications Corp...</div>
<div class="tr" style="right:54.60px;top:166.25px;transform:scaleX(0.823);font-size:10.17px;">9:05:45</div>
<div class="t" style="left:980.40px;top:166.25px;transform:scaleX(0.823);font-size:10.17px;">9:07:51</div>
<svg class="a" style="left:178.20px;top:180.20px" width="11" height="10.4" viewBox="0 0 11 10.4"><rect x=".5" y=".5" width="9.6" height="9" fill="#f4f4f4" stroke="#9a9b9c" stroke-width=".9"/><rect x="2" y="2" width="6.6" height="6" fill="#e4e5e6" stroke="#c2c4c6" stroke-width=".8"/><rect x="3" y="3" width="5" height="4.4" fill="url(#ckg)"/><defs><linearGradient id="ckg" x1="0" y1="0" x2="1" y2="1"><stop offset="0" stop-color="#dcdee0"/><stop offset="1" stop-color="#fbfbfb"/></linearGradient></defs>
<path d="M2.6 4.6 L4.4 7.2 L7.8 2.2" fill="none" stroke="#26387e" stroke-width="1.5" stroke-linejoin="miter"/>
</svg>
<div class="a" style="left:193.00px;top:180.30px;width:9.80px;height:9.80px;background:#4878c0"></div>
<svg class="a" style="left:210.20px;top:180.30px;overflow:visible" width="13" height="10" viewBox="0 0 13 10"><rect x="0.30" y="7.40" width="2.5" height="2.30" fill="#62c828" stroke="#3f9a22" stroke-width=".45"/><rect x="2.80" y="5.40" width="2.5" height="4.30" fill="#62c828" stroke="#3f9a22" stroke-width=".45"/><rect x="5.30" y="3.50" width="2.5" height="6.20" fill="#62c828" stroke="#3f9a22" stroke-width=".45"/><rect x="7.80" y="1.90" width="2.5" height="7.80" fill="#62c828" stroke="#3f9a22" stroke-width=".45"/><rect x="10.30" y="0.40" width="2.5" height="9.30" fill="#62c828" stroke="#3f9a22" stroke-width=".45"/><path d="M1.7 2.2 v-1.2 a1.4 1.4 0 0 1 2.8 0 v1.2" fill="none" stroke="#9aa0a8" stroke-width=".9"/><rect x=".2" y="1.9" width="5.6" height="3.5" rx=".7" fill="#f2b03a" stroke="#c98a1c" stroke-width=".5"/><rect x="2.5" y="2.7" width="1.1" height="1.5" fill="#6a4208"/></svg>
<div class="t" style="left:228.50px;top:180.65px;transform:scaleX(0.823);font-size:10.17px;">Office_22</div>
<div class="tr" style="right:676.60px;top:180.65px;transform:scaleX(0.823);font-size:10.17px;">-47</div>
<div class="tr" style="right:632.80px;top:180.65px;transform:scaleX(0.823);font-size:10.17px;">96%</div>
<div class="tr" style="right:579.80px;top:180.65px;transform:scaleX(0.823);font-size:10.17px;">802.11n</div>
<div class="tr" style="right:528.60px;top:180.65px;transform:scaleX(0.823);font-size:10.17px;">130</div>
<div class="tr" style="right:484.60px;top:180.65px;transform:scaleX(0.823);font-size:10.17px;">1</div>
<div class="tr" style="right:421.40px;top:180.65px;transform:scaleX(0.823);font-size:10.17px;">AES</div>
<div class="tr" style="right:356.80px;top:180.65px;transform:scaleX(0.823);font-size:10.17px;">WPA2-PSK</div>
<div class="tr" style="right:253.00px;top:180.65px;transform:scaleX(0.823);font-size:10.17px;">EE-5D-4E-EB-F1-13</div>
<div class="tr" style="right:54.60px;top:180.65px;transform:scaleX(0.823);font-size:10.17px;">9:05:45</div>
<div class="t" style="left:980.40px;top:180.65px;transform:scaleX(0.823);font-size:10.17px;">9:07:51</div>
<svg class="a" style="left:178.20px;top:194.60px" width="11" height="10.4" viewBox="0 0 11 10.4"><rect x=".5" y=".5" width="9.6" height="9" fill="#f4f4f4" stroke="#9a9b9c" stroke-width=".9"/><rect x="2" y="2" width="6.6" height="6" fill="#e4e5e6" stroke="#c2c4c6" stroke-width=".8"/><rect x="3" y="3" width="5" height="4.4" fill="url(#ckg)"/><defs><linearGradient id="ckg" x1="0" y1="0" x2="1" y2="1"><stop offset="0" stop-color="#dcdee0"/><stop offset="1" stop-color="#fbfbfb"/></linearGradient></defs>
<path d="M2.6 4.6 L4.4 7.2 L7.8 2.2" fill="none" stroke="#26387e" stroke-width="1.5" stroke-linejoin="miter"/>
</svg>
<div class="a" style="left:193.00px;top:194.70px;width:9.80px;height:9.80px;background:#00c010"></div>
<svg class="a" style="left:210.20px;top:194.70px;overflow:visible" width="13" height="10" viewBox="0 0 13 10"><rect x="0.30" y="7.40" width="2.5" height="2.30" fill="#62c828" stroke="#3f9a22" stroke-width=".45"/><rect x="2.80" y="5.40" width="2.5" height="4.30" fill="#62c828" stroke="#3f9a22" stroke-width=".45"/><rect x="5.30" y="3.50" width="2.5" height="6.20" fill="#62c828" stroke="#3f9a22" stroke-width=".45"/><rect x="7.80" y="1.90" width="2.5" height="7.80" fill="#62c828" stroke="#3f9a22" stroke-width=".45"/><rect x="10.30" y="0.40" width="2.5" height="9.30" fill="#62c828" stroke="#3f9a22" stroke-width=".45"/><path d="M1.7 2.2 v-1.2 a1.4 1.4 0 0 1 2.8 0 v1.2" fill="none" stroke="#9aa0a8" stroke-width=".9"/><rect x=".2" y="1.9" width="5.6" height="3.5" rx=".7" fill="#f2b03a" stroke="#c98a1c" stroke-width=".5"/><rect x="2.5" y="2.7" width="1.1" height="1.5" fill="#6a4208"/></svg>
<div class="t" style="left:228.50px;top:195.05px;transform:scaleX(0.823);font-size:10.17px;">Office_23</div>
<div class="tr" style="right:676.60px;top:195.05px;transform:scaleX(0.823);font-size:10.17px;">-47</div>
<div class="tr" style="right:632.80px;top:195.05px;transform:scaleX(0.823);font-size:10.17px;">96%</div>
<div class="tr" style="right:579.80px;top:195.05px;transform:scaleX(0.823);font-size:10.17px;">802.11n</div>
<div class="tr" style="right:528.60px;top:195.05px;transform:scaleX(0.823);font-size:10.17px;">130</div>
<div class="tr" style="right:484.60px;top:195.05px;transform:scaleX(0.823);font-size:10.17px;">1</div>
<div class="tr" style="right:421.40px;top:195.05px;transform:scaleX(0.823);font-size:10.17px;">AES</div>
<div class="tr" style="right:356.80px;top:195.05px;transform:scaleX(0.823);font-size:10.17px;">WPA2-PSK</div>
<div class="tr" style="right:253.00px;top:195.05px;transform:scaleX(0.823);font-size:10.17px;">F2-5D-4E-EB-F1-13</div>
<div class="tr" style="right:54.60px;top:195.05px;transform:scaleX(0.823);font-size:10.17px;">9:05:45</div>
<div class="t" style="left:980.40px;top:195.05px;transform:scaleX(0.823);font-size:10.17px;">9:07:51</div>
<svg class="a" style="left:178.20px;top:209.00px" width="11" height="10.4" viewBox="0 0 11 10.4"><rect x=".5" y=".5" width="9.6" height="9" fill="#f4f4f4" stroke="#9a9b9c" stroke-width=".9"/><rect x="2" y="2" width="6.6" height="6" fill="#e4e5e6" stroke="#c2c4c6" stroke-width=".8"/><rect x="3" y="3" width="5" height="4.4" fill="url(#ckg)"/><defs><linearGradient id="ckg" x1="0" y1="0" x2="1" y2="1"><stop offset="0" stop-color="#dcdee0"/><stop offset="1" stop-color="#fbfbfb"/></linearGradient></defs>
<path d="M2.6 4.6 L4.4 7.2 L7.8 2.2" fill="none" stroke="#26387e" stroke-width="1.5" stroke-linejoin="miter"/>
</svg>
<div class="a" style="left:193.00px;top:209.10px;width:9.80px;height:9.80px;background:#40a8c8"></div>
<svg class="a" style="left:210.20px;top:209.10px;overflow:visible" width="13" height="10" viewBox="0 0 13 10"><rect x="0.30" y="7.40" width="2.5" height="2.30" fill="#62c828" stroke="#3f9a22" stroke-width=".45"/><rect x="2.80" y="5.40" width="2.5" height="4.30" fill="#62c828" stroke="#3f9a22" stroke-width=".45"/><rect x="5.30" y="3.50" width="2.5" height="6.20" fill="#62c828" stroke="#3f9a22" stroke-width=".45"/><rect x="7.80" y="1.90" width="2.5" height="7.80" fill="#62c828" stroke="#3f9a22" stroke-width=".45"/><rect x="10.40" y="0.40" width="2.3" height="9.30" fill="#fdfdfd" stroke="#6e6e6e" stroke-width=".6"/><path d="M1.7 2.2 v-1.2 a1.4 1.4 0 0 1 2.8 0 v1.2" fill="none" stroke="#9aa0a8" stroke-width=".9"/><rect x=".2" y="1.9" width="5.6" height="3.5" rx=".7" fill="#f2b03a" stroke="#c98a1c" stroke-width=".5"/><rect x="2.5" y="2.7" width="1.1" height="1.5" fill="#6a4208"/></svg>
<div class="t" style="left:228.50px;top:209.45px;transform:scaleX(0.823);font-size:10.17px;">Office_24</div>
<div class="tr" style="right:676.60px;top:209.45px;transform:scaleX(0.823);font-size:10.17px;">-51</div>
<div class="tr" style="right:632.80px;top:209.45px;transform:scaleX(0.823);font-size:10.17px;">88%</div>
<div class="tr" style="right:579.80px;top:209.45px;transform:scaleX(0.823);font-size:10.17px;">802.11n</div>
<div class="tr" style="right:528.60px;top:209.45px;transform:scaleX(0.823);font-size:10.17px;">130</div>
<div class="tr" style="right:484.60px;top:209.45px;transform:scaleX(0.823);font-size:10.17px;">1</div>
<div class="tr" style="right:421.40px;top:209.45px;transform:scaleX(0.823);font-size:10.17px;">AES</div>
<div class="tr" style="right:356.80px;top:209.45px;transform:scaleX(0.823);font-size:10.17px;">WPA2-PSK</div>
<div class="tr" style="right:253.00px;top:209.45px;transform:scaleX(0.823);font-size:10.17px;">F6-5D-4E-EB-F1-13</div>
<div class="tr" style="right:54.60px;top:209.45px;transform:scaleX(0.823);font-size:10.17px;">9:05:45</div>
<div class="t" style="left:980.40px;top:209.45px;transform:scaleX(0.823);font-size:10.17px;">9:07:51</div>
<svg class="a" style="left:178.20px;top:223.40px" width="11" height="10.4" viewBox="0 0 11 10.4"><rect x=".5" y=".5" width="9.6" height="9" fill="#f4f4f4" stroke="#9a9b9c" stroke-width=".9"/><rect x="2" y="2" width="6.6" height="6" fill="#e4e5e6" stroke="#c2c4c6" stroke-width=".8"/><rect x="3" y="3" width="5" height="4.4" fill="url(#ckg)"/><defs><linearGradient id="ckg" x1="0" y1="0" x2="1" y2="1"><stop offset="0" stop-color="#dcdee0"/><stop offset="1" stop-color="#fbfbfb"/></linearGradient></defs>
<path d="M2.6 4.6 L4.4 7.2 L7.8 2.2" fill="none" stroke="#26387e" stroke-width="1.5" stroke-linejoin="miter"/>
</svg>
<div class="a" style="left:193.00px;top:223.50px;width:9.80px;height:9.80px;background:#ff4040"></div>
<svg class="a" style="left:210.20px;top:223.50px;overflow:visible" width="13" height="10" viewBox="0 0 13 10"><rect x="0.30" y="7.40" width="2.5" height="2.30" fill="#62c828" stroke="#3f9a22" stroke-width=".45"/><rect x="2.80" y="5.40" width="2.5" height="4.30" fill="#62c828" stroke="#3f9a22" stroke-width=".45"/><rect x="5.30" y="3.50" width="2.5" height="6.20" fill="#62c828" stroke="#3f9a22" stroke-width=".45"/><rect x="7.80" y="1.90" width="2.5" height="7.80" fill="#62c828" stroke="#3f9a22" stroke-width=".45"/><rect x="10.40" y="0.40" width="2.3" height="9.30" fill="#fdfdfd" stroke="#6e6e6e" stroke-width=".6"/><path d="M1.7 2.2 v-1.2 a1.4 1.4 0 0 1 2.8 0 v1.2" fill="none" stroke="#9aa0a8" stroke-width=".9"/><rect x=".2" y="1.9" width="5.6" height="3.5" rx=".7" fill="#f2b03a" stroke="#c98a1c" stroke-width=".5"/><rect x="2.5" y="2.7" width="1.1" height="1.5" fill="#6a4208"/></svg>
<div class="t" style="left:228.50px;top:223.85px;transform:scaleX(0.823);font-size:10.17px;">Office_31</div>
<div class="tr" style="right:676.60px;top:223.85px;transform:scaleX(0.823);font-size:10.17px;">-51</div>
<div class="tr" style="right:632.80px;top:223.85px;transform:scaleX(0.823);font-size:10.17px;">88%</div>
<div class="tr" style="right:579.80px;top:223.85px;transform:scaleX(0.823);font-size:10.17px;">802.11n</div>
<div class="tr" style="right:528.60px;top:223.85px;transform:scaleX(0.823);font-size:10.17px;">130</div>
<div class="tr" style="right:484.60px;top:223.85px;transform:scaleX(0.823);font-size:10.17px;">1</div>
<div class="tr" style="right:421.40px;top:223.85px;transform:scaleX(0.823);font-size:10.17px;">AES</div>
<div class="tr" style="right:356.80px;top:223.85px;transform:scaleX(0.823);font-size:10.17px;">WPA2-PSK</div>
<div class="tr" style="right:253.00px;top:223.85px;transform:scaleX(0.823);font-size:10.17px;">FA-5D-4E-EB-F1-13</div>
<div class="tr" style="right:54.60px;top:223.85px;transform:scaleX(0.823);font-size:10.17px;">9:05:45</div>
<div class="t" style="left:980.40px;top:223.85px;transform:scaleX(0.823);font-size:10.17px;">9:07:51</div>
<svg class="a" style="left:178.20px;top:237.80px" width="11" height="10.4" viewBox="0 0 11 10.4"><rect x=".5" y=".5" width="9.6" height="9" fill="#f4f4f4" stroke="#9a9b9c" stroke-width=".9"/><rect x="2" y="2" width="6.6" height="6" fill="#e4e5e6" stroke="#c2c4c6" stroke-width=".8"/><rect x="3" y="3" width="5" height="4.4" fill="url(#ckg)"/><defs><linearGradient id="ckg" x1="0" y1="0" x2="1" y2="1"><stop offset="0" stop-color="#dcdee0"/><stop offset="1" stop-color="#fbfbfb"/></linearGradient></defs>
<path d="M2.6 4.6 L4.4 7.2 L7.8 2.2" fill="none" stroke="#26387e" stroke-width="1.5" stroke-linejoin="miter"/>
</svg>
<div class="a" style="left:193.00px;top:237.90px;width:9.80px;height:9.80px;background:#c800c8"></div>
<svg class="a" style="left:210.20px;top:237.90px;overflow:visible" width="13" height="10" viewBox="0 0 13 10"><rect x="0.30" y="7.40" width="2.5" height="2.30" fill="#62c828" stroke="#3f9a22" stroke-width=".45"/><rect x="2.80" y="5.40" width="2.5" height="4.30" fill="#62c828" stroke="#3f9a22" stroke-width=".45"/><rect x="5.30" y="3.50" width="2.5" height="6.20" fill="#62c828" stroke="#3f9a22" stroke-width=".45"/><rect x="7.80" y="1.90" width="2.5" height="7.80" fill="#62c828" stroke="#3f9a22" stroke-width=".45"/><rect x="10.30" y="0.40" width="2.5" height="9.30" fill="#62c828" stroke="#3f9a22" stroke-width=".45"/><path d="M1.7 2.2 v-1.2 a1.4 1.4 0 0 1 2.8 0 v1.2" fill="none" stroke="#9aa0a8" stroke-width=".9"/><rect x=".2" y="1.9" width="5.6" height="3.5" rx=".7" fill="#f2b03a" stroke="#c98a1c" stroke-width=".5"/><rect x="2.5" y="2.7" width="1.1" height="1.5" fill="#6a4208"/></svg>
<div class="t" style="left:228.50px;top:238.25px;transform:scaleX(0.823);font-size:10.17px;">Office_Guest</div>
<div class="tr" style="right:676.60px;top:238.25px;transform:scaleX(0.823);font-size:10.17px;">-47</div>
<div class="tr" style="right:632.80px;top:238.25px;transform:scaleX(0.823);font-size:10.17px;">96%</div>
<div class="tr" style="right:579.80px;top:238.25px;transform:scaleX(0.823);font-size:10.17px;">802.11n</div>
<div class="tr" style="right:528.60px;top:238.25px;transform:scaleX(0.823);font-size:10.17px;">130</div>
<div class="tr" style="right:484.60px;top:238.25px;transform:scaleX(0.823);font-size:10.17px;">1</div>
<div class="tr" style="right:421.40px;top:238.25px;transform:scaleX(0.823);font-size:10.17px;">AES</div>
<div class="tr" style="right:356.80px;top:238.25px;transform:scaleX(0.823);font-size:10.17px;">WPA2-PSK</div>
<div class="tr" style="right:253.00px;top:238.25px;transform:scaleX(0.823);font-size:10.17px;">FE-5D-4E-EB-F1-13</div>
<div class="tr" style="right:54.60px;top:238.25px;transform:scaleX(0.823);font-size:10.17px;">9:05:45</div>
<div class="t" style="left:980.40px;top:238.25px;transform:scaleX(0.823);font-size:10.17px;">9:07:51</div>
<svg class="a" style="left:178.20px;top:252.20px" width="11" height="10.4" viewBox="0 0 11 10.4"><rect x=".5" y=".5" width="9.6" height="9" fill="#f4f4f4" stroke="#9a9b9c" stroke-width=".9"/><rect x="2" y="2" width="6.6" height="6" fill="#e4e5e6" stroke="#c2c4c6" stroke-width=".8"/><rect x="3" y="3" width="5" height="4.4" fill="url(#ckg)"/><defs><linearGradient id="ckg" x1="0" y1="0" x2="1" y2="1"><stop offset="0" stop-color="#dcdee0"/><stop offset="1" stop-color="#fbfbfb"/></linearGradient></defs>
<path d="M2.6 4.6 L4.4 7.2 L7.8 2.2" fill="none" stroke="#26387e" stroke-width="1.5" stroke-linejoin="miter"/>
</svg>
<div class="a" style="left:193.00px;top:252.30px;width:9.80px;height:9.80px;background:#ffff40"></div>
<svg class="a" style="left:210.20px;top:252.30px;overflow:visible" width="13" height="10" viewBox="0 0 13 10"><rect x="0.30" y="7.40" width="2.5" height="2.30" fill="#62c828" stroke="#3f9a22" stroke-width=".45"/><rect x="2.80" y="5.40" width="2.5" height="4.30" fill="#62c828" stroke="#3f9a22" stroke-width=".45"/><rect x="5.30" y="3.50" width="2.5" height="6.20" fill="#62c828" stroke="#3f9a22" stroke-width=".45"/><rect x="7.80" y="1.90" width="2.5" height="7.80" fill="#62c828" stroke="#3f9a22" stroke-width=".45"/><rect x="10.40" y="0.40" width="2.3" height="9.30" fill="#fdfdfd" stroke="#6e6e6e" stroke-width=".6"/><path d="M1.7 2.2 v-1.2 a1.4 1.4 0 0 1 2.8 0 v1.2" fill="none" stroke="#9aa0a8" stroke-width=".9"/><rect x=".2" y="1.9" width="5.6" height="3.5" rx=".7" fill="#f2b03a" stroke="#c98a1c" stroke-width=".5"/><rect x="2.5" y="2.7" width="1.1" height="1.5" fill="#6a4208"/></svg>
<div class="t" style="left:228.50px;top:252.65px;transform:scaleX(0.823);font-size:10.17px;">vladik</div>
<div class="tr" style="right:676.60px;top:252.65px;transform:scaleX(0.823);font-size:10.17px;">-58</div>
<div class="tr" style="right:632.80px;top:252.65px;transform:scaleX(0.823);font-size:10.17px;">74%</div>
<div class="tr" style="right:579.80px;top:252.65px;transform:scaleX(0.823);font-size:10.17px;">802.11n</div>
<div class="tr" style="right:528.60px;top:252.65px;transform:scaleX(0.823);font-size:10.17px;">72,2</div>
<div class="tr" style="right:484.60px;top:252.65px;transform:scaleX(0.823);font-size:10.17px;">13</div>
<div class="tr" style="right:421.40px;top:252.65px;transform:scaleX(0.823);font-size:10.17px;">AES</div>
<div class="tr" style="right:356.80px;top:252.65px;transform:scaleX(0.823);font-size:10.17px;">WPA2-PSK</div>
<div class="tr" style="right:253.00px;top:252.65px;transform:scaleX(0.823);font-size:10.17px;">D8-50-E6-5E-8E-D4</div>
<div class="tr" style="right:54.60px;top:252.65px;transform:scaleX(0.823);font-size:10.17px;">9:05:48</div>
<div class="t" style="left:980.40px;top:252.65px;transform:scaleX(0.823);font-size:10.17px;">9:07:51</div>
<svg class="a" style="left:178.20px;top:266.60px" width="11" height="10.4" viewBox="0 0 11 10.4"><rect x=".5" y=".5" width="9.6" height="9" fill="#f4f4f4" stroke="#9a9b9c" stroke-width=".9"/><rect x="2" y="2" width="6.6" height="6" fill="#e4e5e6" stroke="#c2c4c6" stroke-width=".8"/><rect x="3" y="3" width="5" height="4.4" fill="url(#ckg)"/><defs><linearGradient id="ckg" x1="0" y1="0" x2="1" y2="1"><stop offset="0" stop-color="#dcdee0"/><stop offset="1" stop-color="#fbfbfb"/></linearGradient></defs>
<path d="M2.6 4.6 L4.4 7.2 L7.8 2.2" fill="none" stroke="#26387e" stroke-width="1.5" stroke-linejoin="miter"/>
</svg>
<div class="a" style="left:193.00px;top:266.70px;width:9.80px;height:9.80px;background:#ffc000"></div>
<svg class="a" style="left:210.20px;top:266.70px;overflow:visible" width="13" height="10" viewBox="0 0 13 10"><rect x="0.30" y="7.40" width="2.5" height="2.30" fill="#62c828" stroke="#3f9a22" stroke-width=".45"/><rect x="2.80" y="5.40" width="2.5" height="4.30" fill="#62c828" stroke="#3f9a22" stroke-width=".45"/><rect x="5.30" y="3.50" width="2.5" height="6.20" fill="#62c828" stroke="#3f9a22" stroke-width=".45"/><rect x="7.80" y="1.90" width="2.5" height="7.80" fill="#62c828" stroke="#3f9a22" stroke-width=".45"/><rect x="10.30" y="0.40" width="2.5" height="9.30" fill="#62c828" stroke="#3f9a22" stroke-width=".45"/></svg>
<div class="t" style="left:228.50px;top:267.05px;transform:scaleX(0.823);font-size:10.17px;">ZyXEL</div>
<div class="tr" style="right:676.60px;top:267.05px;transform:scaleX(0.823);font-size:10.17px;">-45</div>
<div class="tr" style="right:632.80px;top:267.05px;transform:scaleX(0.823);font-size:10.17px;">100%</div>
<div class="tr" style="right:579.80px;top:267.05px;transform:scaleX(0.823);font-size:10.17px;">802.11n</div>
<div class="tr" style="right:528.60px;top:267.05px;transform:scaleX(0.823);font-size:10.17px;">130</div>
<div class="tr" style="right:484.60px;top:267.05px;transform:scaleX(0.823);font-size:10.17px;">6</div>
<div class="tr" style="right:421.40px;top:267.05px;transform:scaleX(0.823);font-size:10.17px;">None</div>
<div class="tr" style="right:356.80px;top:267.05px;transform:scaleX(0.823);font-size:10.17px;">Open</div>
<div class="tr" style="right:253.00px;top:267.05px;transform:scaleX(0.823);font-size:10.17px;">40-4A-03-79-DB-95</div>
<div class="t" style="left:780.80px;top:267.05px;transform:scaleX(0.823);font-size:10.17px;">ZyXEL Communications Corp...</div>
<div class="tr" style="right:54.60px;top:267.05px;transform:scaleX(0.823);font-size:10.17px;">9:05:45</div>
<div class="t" style="left:980.40px;top:267.05px;transform:scaleX(0.823);font-size:10.17px;">9:07:51</div>
<svg class="a" style="left:178.20px;top:281.00px" width="11" height="10.4" viewBox="0 0 11 10.4"><rect x=".5" y=".5" width="9.6" height="9" fill="#f4f4f4" stroke="#9a9b9c" stroke-width=".9"/><rect x="2" y="2" width="6.6" height="6" fill="#e4e5e6" stroke="#c2c4c6" stroke-width=".8"/><rect x="3" y="3" width="5" height="4.4" fill="url(#ckg)"/><defs><linearGradient id="ckg" x1="0" y1="0" x2="1" y2="1"><stop offset="0" stop-color="#dcdee0"/><stop offset="1" stop-color="#fbfbfb"/></linearGradient></defs>
<path d="M2.6 4.6 L4.4 7.2 L7.8 2.2" fill="none" stroke="#26387e" stroke-width="1.5" stroke-linejoin="miter"/>
</svg>
<div class="a" style="left:193.00px;top:281.10px;width:9.80px;height:9.80px;background:#c00000"></div>
<svg class="a" style="left:210.20px;top:281.10px;overflow:visible" width="13" height="10" viewBox="0 0 13 10"><rect x="0.30" y="7.40" width="2.5" height="2.30" fill="#62c828" stroke="#3f9a22" stroke-width=".45"/><rect x="2.80" y="5.40" width="2.5" height="4.30" fill="#62c828" stroke="#3f9a22" stroke-width=".45"/><rect x="5.30" y="3.50" width="2.5" height="6.20" fill="#62c828" stroke="#3f9a22" stroke-width=".45"/><rect x="7.80" y="1.90" width="2.5" height="7.80" fill="#62c828" stroke="#3f9a22" stroke-width=".45"/><rect x="10.30" y="0.40" width="2.5" height="9.30" fill="#62c828" stroke="#3f9a22" stroke-width=".45"/><path d="M1.7 2.2 v-1.2 a1.4 1.4 0 0 1 2.8 0 v1.2" fill="none" stroke="#9aa0a8" stroke-width=".9"/><rect x=".2" y="1.9" width="5.6" height="3.5" rx=".7" fill="#f2b03a" stroke="#c98a1c" stroke-width=".5"/><rect x="2.5" y="2.7" width="1.1" height="1.5" fill="#6a4208"/></svg>
<div class="t" style="left:228.50px;top:281.45px;transform:scaleX(0.823);font-size:10.17px;">ZyXEL_1BC8</div>
<div class="tr" style="right:676.60px;top:281.45px;transform:scaleX(0.823);font-size:10.17px;">-45</div>
<div class="tr" style="right:632.80px;top:281.45px;transform:scaleX(0.823);font-size:10.17px;">100%</div>
<div class="tr" style="right:579.80px;top:281.45px;transform:scaleX(0.823);font-size:10.17px;">802.11n</div>
<div class="tr" style="right:528.60px;top:281.45px;transform:scaleX(0.823);font-size:10.17px;">300</div>
<div class="tr" style="right:484.60px;top:281.45px;transform:scaleX(0.823);font-size:10.17px;">1</div>
<div class="tr" style="right:421.40px;top:281.45px;transform:scaleX(0.823);font-size:10.17px;">AES</div>
<div class="tr" style="right:356.80px;top:281.45px;transform:scaleX(0.823);font-size:10.17px;">WPA2-PSK</div>
<div class="tr" style="right:253.00px;top:281.45px;transform:scaleX(0.823);font-size:10.17px;">B2-B2-DC-3B-1B-C8</div>
<div class="tr" style="right:54.60px;top:281.45px;transform:scaleX(0.823);font-size:10.17px;">9:05:45</div>
<div class="t" style="left:980.40px;top:281.45px;transform:scaleX(0.823);font-size:10.17px;">9:07:51</div>
<div class="a" style="left:173.90px;top:335.60px;width:842.20px;height:12.90px;background:#f0f0f0"></div>
<svg class="a" style="left:178.4px;top:338.6px" width="5" height="7" viewBox="0 0 5 7"><path d="M4.2 .6 L1 3.5 L4.2 6.4 Z" fill="#404040"/></svg>
<svg class="a" style="left:1005.6px;top:338.6px" width="5" height="7" viewBox="0 0 5 7"><path d="M.8 .6 L4 3.5 L.8 6.4 Z" fill="#202020"/></svg>
<div class="a" style="left:189.40px;top:336.40px;width:791.20px;height:11.40px;background:linear-gradient(#f4f4f4 0%,#e6e6e6 45%,#d0d0d0 50%,#d8d8d8 100%);border:1px solid #9a9a9a;border-radius:2px"></div>
<div class="a" style="left:581.60px;top:339.20px;width:0.90px;height:5.60px;background:#6a6a6a"></div>
<div class="a" style="left:583.80px;top:339.20px;width:0.90px;height:5.60px;background:#6a6a6a"></div>
<div class="a" style="left:586.00px;top:339.20px;width:0.90px;height:5.60px;background:#6a6a6a"></div>
<svg class="a" style="left:7px;top:351px" width="1011" height="4" viewBox="0 0 1011 4"><path d="M0.2 1.9 H1010.4" stroke="#b0b0b0" stroke-width="1.8" stroke-dasharray="2.3 2.5"/></svg>
<div class="a" style="left:7.00px;top:372.00px;width:1008.00px;height:390.60px;background:#fff;border:1px solid #8b8e97"></div>
<div class="a" style="left:8.60px;top:357.00px;width:32.20px;height:15.20px;background:linear-gradient(#f7f7f7 0%,#efefef 50%,#e3e3e3 50%,#d9d9d9 100%);border:1px solid #8e9199;border-bottom:none;box-shadow:inset 0 0 0 .8px rgba(255,255,255,.8)"></div>
<div class="t" style="left:13.60px;top:360.55px;transform:scaleX(0.841);font-size:10.17px;">Graph</div>
<div class="a" style="left:106.40px;top:357.00px;width:53.00px;height:15.20px;background:linear-gradient(#f7f7f7 0%,#efefef 50%,#e3e3e3 50%,#d9d9d9 100%);border:1px solid #8e9199;border-bottom:none;box-shadow:inset 0 0 0 .8px rgba(255,255,255,.8)"></div>
<div class="t" style="left:110.20px;top:360.55px;transform:scaleX(0.841);font-size:10.17px;">5 GHz band</div>
<div class="a" style="left:160.60px;top:357.00px;width:52.80px;height:15.20px;background:linear-gradient(#f7f7f7 0%,#efefef 50%,#e3e3e3 50%,#d9d9d9 100%);border:1px solid #8e9199;border-bottom:none;box-shadow:inset 0 0 0 .8px rgba(255,255,255,.8)"></div>
<div class="t" style="left:165.00px;top:360.55px;transform:scaleX(0.841);font-size:10.17px;">Scanner log</div>
<div class="a" style="left:40.80px;top:355.40px;width:65.60px;height:17.60px;background:#fff;border:1px solid #8b8e97;border-bottom:none"></div>
<div class="t" style="left:46.60px;top:358.95px;transform:scaleX(0.819);font-size:10.17px;">2.4 GHz band</div>
<svg class="a" style="left:0;top:373px" width="1014" height="389" viewBox="0 373 1014 389"><defs><clipPath id="cp"><rect x="58.60" y="388.60" width="776.00" height="336.50"/></clipPath></defs><path d="M58.60 410.54 H834.60" stroke="#cfcfcf" stroke-width=".8" stroke-dasharray="1.6 1.6"/><path d="M58.60 431.48 H834.60" stroke="#cfcfcf" stroke-width=".8" stroke-dasharray="1.6 1.6"/><path d="M58.60 452.41 H834.60" stroke="#cfcfcf" stroke-width=".8" stroke-dasharray="1.6 1.6"/><path d="M58.60 473.35 H834.60" stroke="#cfcfcf" stroke-width=".8" stroke-dasharray="1.6 1.6"/><path d="M58.60 494.29 H834.60" stroke="#cfcfcf" stroke-width=".8" stroke-dasharray="1.6 1.6"/><path d="M58.60 515.23 H834.60" stroke="#cfcfcf" stroke-width=".8" stroke-dasharray="1.6 1.6"/><path d="M58.60 536.16 H834.60" stroke="#cfcfcf" stroke-width=".8" stroke-dasharray="1.6 1.6"/><path d="M58.60 557.10 H834.60" stroke="#cfcfcf" stroke-width=".8" stroke-dasharray="1.6 1.6"/><path d="M58.60 578.04 H834.60" stroke="#cfcfcf" stroke-width=".8" stroke-dasharray="1.6 1.6"/><path d="M58.60 598.98 H834.60" stroke="#cfcfcf" stroke-width=".8" stroke-dasharray="1.6 1.6"/><path d="M58.60 619.91 H834.60" stroke="#cfcfcf" stroke-width=".8" stroke-dasharray="1.6 1.6"/><path d="M58.60 640.85 H834.60" stroke="#cfcfcf" stroke-width=".8" stroke-dasharray="1.6 1.6"/><path d="M58.60 661.79 H834.60" stroke="#cfcfcf" stroke-width=".8" stroke-dasharray="1.6 1.6"/><path d="M58.60 682.73 H834.60" stroke="#cfcfcf" stroke-width=".8" stroke-dasharray="1.6 1.6"/><path d="M58.60 703.66 H834.60" stroke="#cfcfcf" stroke-width=".8" stroke-dasharray="1.6 1.6"/><path d="M197.20 389.60 V724.60" stroke="#d4d4d4" stroke-width=".8" stroke-dasharray="1.6 1.6"/><path d="M231.85 389.60 V724.60" stroke="#d4d4d4" stroke-width=".8" stroke-dasharray="1.6 1.6"/><path d="M266.50 389.60 V724.60" stroke="#d4d4d4" stroke-width=".8" stroke-dasharray="1.6 1.6"/><path d="M301.15 389.60 V724.60" stroke="#d4d4d4" stroke-width=".8" stroke-dasharray="1.6 1.6"/><path d="M335.80 389.60 V724.60" stroke="#d4d4d4" stroke-width=".8" stroke-dasharray="1.6 1.6"/><path d="M370.45 389.60 V724.60" stroke="#d4d4d4" stroke-width=".8" stroke-dasharray="1.6 1.6"/><path d="M405.10 389.60 V724.60" stroke="#d4d4d4" stroke-width=".8" stroke-dasharray="1.6 1.6"/><path d="M439.75 389.60 V724.60" stroke="#d4d4d4" stroke-width=".8" stroke-dasharray="1.6 1.6"/><path d="M474.40 389.60 V724.60" stroke="#d4d4d4" stroke-width=".8" stroke-dasharray="1.6 1.6"/><path d="M509.05 389.60 V724.60" stroke="#d4d4d4" stroke-width=".8" stroke-dasharray="1.6 1.6"/><path d="M543.70 389.60 V724.60" stroke="#d4d4d4" stroke-width=".8" stroke-dasharray="1.6 1.6"/><path d="M578.35 389.60 V724.60" stroke="#d4d4d4" stroke-width=".8" stroke-dasharray="1.6 1.6"/><path d="M613.00 389.60 V724.60" stroke="#d4d4d4" stroke-width=".8" stroke-dasharray="1.6 1.6"/><path d="M696.16 389.60 V724.60" stroke="#d4d4d4" stroke-width=".8" stroke-dasharray="1.6 1.6"/><g clip-path="url(#cp)" fill="none" stroke-width="1.1" stroke-linejoin="round"><path d="M-219.50 724.60 L-219.50 699.48 L-80.00 628.29 L51.67 594.79 L65.53 511.50 L328.87 511.50 L342.73 594.79 L474.40 628.29 L612.50 699.48 L612.50 724.60" stroke="#bf5b05"/><path d="M-219.50 724.60 L-219.50 707.85 L-80.00 636.66 L51.67 603.16 L65.53 519.50 L328.87 519.50 L342.73 603.16 L474.40 636.66 L612.50 707.85 L612.50 724.60" stroke="#ff4040"/><path d="M-219.50 724.60 L-219.50 691.10 L-80.00 619.91 L51.67 586.41 L65.53 502.50 L328.87 502.50 L342.73 586.41 L474.40 619.91 L612.50 691.10 L612.50 724.60" stroke="#c800c8"/><path d="M196.50 724.60 L196.50 737.16 L335.80 665.98 L467.47 632.48 L481.33 548.50 L744.67 548.50 L758.53 632.48 L890.20 665.98 L1028.50 737.16 L1028.50 724.60" stroke="#ffff40"/><path d="M-45.50 724.60 L-45.50 682.73 L93.25 611.54 L224.92 578.04 L238.78 494.50 L502.12 494.50 L515.98 578.04 L647.65 611.54 L785.50 682.73 L785.50 724.60" stroke="#ffb400"/><path d="M-219.50 724.60 L-219.50 682.73 L-80.00 611.54 L51.67 578.04 L65.53 494.50 L328.87 494.50 L342.73 578.04 L474.40 611.54 L612.50 682.73 L612.50 724.60" stroke="#c00000"/></g><text transform="translate(370.45 491.59) scale(0.971 1)" text-anchor="middle" fill="#ff3399" font-size="7.62">assasin</text><text transform="translate(370.45 491.59) scale(0.971 1)" text-anchor="middle" fill="#92d050" font-size="7.62">FreeInternet</text><text transform="translate(197.20 508.34) scale(0.971 1)" text-anchor="middle" fill="#bf5b05" font-size="7.62">Office_21</text><text transform="translate(197.20 499.96) scale(0.971 1)" text-anchor="middle" fill="#4878c0" font-size="7.62">Office_22</text><text transform="translate(197.20 499.96) scale(0.971 1)" text-anchor="middle" fill="#00c010" font-size="7.62">Office_23</text><text transform="translate(197.20 516.71) scale(0.971 1)" text-anchor="middle" fill="#40a8c8" font-size="7.62">Office_24</text><text transform="translate(197.20 516.71) scale(0.971 1)" text-anchor="middle" fill="#ff4040" font-size="7.62">Office_31</text><text transform="translate(197.20 499.96) scale(0.971 1)" text-anchor="middle" fill="#c800c8" font-size="7.62">Office_Guest</text><text transform="translate(613.00 546.02) scale(0.971 1)" text-anchor="middle" fill="#ffff40" font-size="7.62">vladik</text><text transform="translate(370.45 491.59) scale(0.971 1)" text-anchor="middle" fill="#ffb400" font-size="7.62">ZyXEL</text><text transform="translate(197.20 491.59) scale(0.971 1)" text-anchor="middle" fill="#c00000" font-size="7.62">ZyXEL_1BC8</text><path d="M58.60 389.60 H834.60" stroke="#555" stroke-width=".9"/><path d="M58.60 389.10 V725.10" stroke="#555" stroke-width=".9"/><path d="M834.60 389.10 V725.10" stroke="#555" stroke-width=".9"/><path d="M58.60 724.60 H834.60" stroke="#555" stroke-width=".9"/><path d="M55.80 389.60 h2.8 M834.60 389.60 h2.8" stroke="#4a4a4a" stroke-width=".9"/><text transform="translate(54.00 392.00) scale(0.971 1)" text-anchor="end" font-size="7.83">-20</text><text transform="translate(837.60 392.00) scale(0.971 1)" font-size="7.83">-20</text><path d="M55.80 410.54 h2.8 M834.60 410.54 h2.8" stroke="#4a4a4a" stroke-width=".9"/><text transform="translate(54.00 412.94) scale(0.971 1)" text-anchor="end" font-size="7.83">-25</text><text transform="translate(837.60 412.94) scale(0.971 1)" font-size="7.83">-25</text><path d="M55.80 431.48 h2.8 M834.60 431.48 h2.8" stroke="#4a4a4a" stroke-width=".9"/><text transform="translate(54.00 433.88) scale(0.971 1)" text-anchor="end" font-size="7.83">-30</text><text transform="translate(837.60 433.88) scale(0.971 1)" font-size="7.83">-30</text><path d="M55.80 452.41 h2.8 M834.60 452.41 h2.8" stroke="#4a4a4a" stroke-width=".9"/><text transform="translate(54.00 454.81) scale(0.971 1)" text-anchor="end" font-size="7.83">-35</text><text transform="translate(837.60 454.81) scale(0.971 1)" font-size="7.83">-35</text><path d="M55.80 473.35 h2.8 M834.60 473.35 h2.8" stroke="#4a4a4a" stroke-width=".9"/><text transform="translate(54.00 475.75) scale(0.971 1)" text-anchor="end" font-size="7.83">-40</text><text transform="translate(837.60 475.75) scale(0.971 1)" font-size="7.83">-40</text><path d="M55.80 494.29 h2.8 M834.60 494.29 h2.8" stroke="#4a4a4a" stroke-width=".9"/><text transform="translate(54.00 496.69) scale(0.971 1)" text-anchor="end" font-size="7.83">-45</text><text transform="translate(837.60 496.69) scale(0.971 1)" font-size="7.83">-45</text><path d="M55.80 515.23 h2.8 M834.60 515.23 h2.8" stroke="#4a4a4a" stroke-width=".9"/><text transform="translate(54.00 517.62) scale(0.971 1)" text-anchor="end" font-size="7.83">-50</text><text transform="translate(837.60 517.62) scale(0.971 1)" font-size="7.83">-50</text><path d="M55.80 536.16 h2.8 M834.60 536.16 h2.8" stroke="#4a4a4a" stroke-width=".9"/><text transform="translate(54.00 538.56) scale(0.971 1)" text-anchor="end" font-size="7.83">-55</text><text transform="translate(837.60 538.56) scale(0.971 1)" font-size="7.83">-55</text><path d="M55.80 557.10 h2.8 M834.60 557.10 h2.8" stroke="#4a4a4a" stroke-width=".9"/><text transform="translate(54.00 559.50) scale(0.971 1)" text-anchor="end" font-size="7.83">-60</text><text transform="translate(837.60 559.50) scale(0.971 1)" font-size="7.83">-60</text><path d="M55.80 578.04 h2.8 M834.60 578.04 h2.8" stroke="#4a4a4a" stroke-width=".9"/><text transform="translate(54.00 580.44) scale(0.971 1)" text-anchor="end" font-size="7.83">-65</text><text transform="translate(837.60 580.44) scale(0.971 1)" font-size="7.83">-65</text><path d="M55.80 598.98 h2.8 M834.60 598.98 h2.8" stroke="#4a4a4a" stroke-width=".9"/><text transform="translate(54.00 601.38) scale(0.971 1)" text-anchor="end" font-size="7.83">-70</text><text transform="translate(837.60 601.38) scale(0.971 1)" font-size="7.83">-70</text><path d="M55.80 619.91 h2.8 M834.60 619.91 h2.8" stroke="#4a4a4a" stroke-width=".9"/><text transform="translate(54.00 622.31) scale(0.971 1)" text-anchor="end" font-size="7.83">-75</text><text transform="translate(837.60 622.31) scale(0.971 1)" font-size="7.83">-75</text><path d="M55.80 640.85 h2.8 M834.60 640.85 h2.8" stroke="#4a4a4a" stroke-width=".9"/><text transform="translate(54.00 643.25) scale(0.971 1)" text-anchor="end" font-size="7.83">-80</text><text transform="translate(837.60 643.25) scale(0.971 1)" font-size="7.83">-80</text><path d="M55.80 661.79 h2.8 M834.60 661.79 h2.8" stroke="#4a4a4a" stroke-width=".9"/><text transform="translate(54.00 664.19) scale(0.971 1)" text-anchor="end" font-size="7.83">-85</text><text transform="translate(837.60 664.19) scale(0.971 1)" font-size="7.83">-85</text><path d="M55.80 682.73 h2.8 M834.60 682.73 h2.8" stroke="#4a4a4a" stroke-width=".9"/><text transform="translate(54.00 685.12) scale(0.971 1)" text-anchor="end" font-size="7.83">-90</text><text transform="translate(837.60 685.12) scale(0.971 1)" font-size="7.83">-90</text><path d="M55.80 703.66 h2.8 M834.60 703.66 h2.8" stroke="#4a4a4a" stroke-width=".9"/><text transform="translate(54.00 706.06) scale(0.971 1)" text-anchor="end" font-size="7.83">-95</text><text transform="translate(837.60 706.06) scale(0.971 1)" font-size="7.83">-95</text><path d="M55.80 724.60 h2.8 M834.60 724.60 h2.8" stroke="#4a4a4a" stroke-width=".9"/><text transform="translate(54.00 727.00) scale(0.971 1)" text-anchor="end" font-size="7.83">-100</text><text transform="translate(837.60 727.00) scale(0.971 1)" font-size="7.83">-100</text><path d="M197.20 724.60 v2.8" stroke="#4a4a4a" stroke-width=".9"/><text transform="translate(197.20 736.40) scale(0.971 1)" text-anchor="middle" font-size="7.83">1</text><path d="M231.85 724.60 v2.8" stroke="#4a4a4a" stroke-width=".9"/><text transform="translate(231.85 736.40) scale(0.971 1)" text-anchor="middle" font-size="7.83">2</text><path d="M266.50 724.60 v2.8" stroke="#4a4a4a" stroke-width=".9"/><text transform="translate(266.50 736.40) scale(0.971 1)" text-anchor="middle" font-size="7.83">3</text><path d="M301.15 724.60 v2.8" stroke="#4a4a4a" stroke-width=".9"/><text transform="translate(301.15 736.40) scale(0.971 1)" text-anchor="middle" font-size="7.83">4</text><path d="M335.80 724.60 v2.8" stroke="#4a4a4a" stroke-width=".9"/><text transform="translate(335.80 736.40) scale(0.971 1)" text-anchor="middle" font-size="7.83">5</text><path d="M370.45 724.60 v2.8" stroke="#4a4a4a" stroke-width=".9"/><text transform="translate(370.45 736.40) scale(0.971 1)" text-anchor="middle" font-size="7.83">6</text><path d="M405.10 724.60 v2.8" stroke="#4a4a4a" stroke-width=".9"/><text transform="translate(405.10 736.40) scale(0.971 1)" text-anchor="middle" font-size="7.83">7</text><path d="M439.75 724.60 v2.8" stroke="#4a4a4a" stroke-width=".9"/><text transform="translate(439.75 736.40) scale(0.971 1)" text-anchor="middle" font-size="7.83">8</text><path d="M474.40 724.60 v2.8" stroke="#4a4a4a" stroke-width=".9"/><text transform="translate(474.40 736.40) scale(0.971 1)" text-anchor="middle" font-size="7.83">9</text><path d="M509.05 724.60 v2.8" stroke="#4a4a4a" stroke-width=".9"/><text transform="translate(509.05 736.40) scale(0.971 1)" text-anchor="middle" font-size="7.83">10</text><path d="M543.70 724.60 v2.8" stroke="#4a4a4a" stroke-width=".9"/><text transform="translate(543.70 736.40) scale(0.971 1)" text-anchor="middle" font-size="7.83">11</text><path d="M578.35 724.60 v2.8" stroke="#4a4a4a" stroke-width=".9"/><text transform="translate(578.35 736.40) scale(0.971 1)" text-anchor="middle" font-size="7.83">12</text><path d="M613.00 724.60 v2.8" stroke="#4a4a4a" stroke-width=".9"/><text transform="translate(613.00 736.40) scale(0.971 1)" text-anchor="middle" font-size="7.83">13</text><path d="M696.16 724.60 v2.8" stroke="#4a4a4a" stroke-width=".9"/><text transform="translate(696.16 736.40) scale(0.971 1)" text-anchor="middle" font-size="7.83">14</text><text transform="translate(469.50 748.90) scale(0.971 1)" text-anchor="middle" font-size="7.83">Channels</text><text transform="translate(30.60 557.40) rotate(-90) scale(0.971 1)" text-anchor="middle" font-size="7.83">RSSI (dBm)</text><rect x="864.4" y="384.6" width="139.2" height="142.8" fill="#fff" stroke="#4c4c4c" stroke-width=".9"/><path d="M869.4 395.00 H878.6" stroke="#ff3399" stroke-width="1.1"/><text transform="translate(884.00 397.50) scale(0.971 1)" font-size="7.73">assasin</text><path d="M869.4 406.95 H878.6" stroke="#92d050" stroke-width="1.1"/><text transform="translate(884.00 409.45) scale(0.971 1)" font-size="7.73">FreeInternet</text><path d="M869.4 418.90 H878.6" stroke="#bf5b05" stroke-width="1.1"/><text transform="translate(884.00 421.40) scale(0.971 1)" font-size="7.73">Office_21</text><path d="M869.4 430.85 H878.6" stroke="#4878c0" stroke-width="1.1"/><text transform="translate(884.00 433.35) scale(0.971 1)" font-size="7.73">Office_22</text><path d="M869.4 442.80 H878.6" stroke="#00c010" stroke-width="1.1"/><text transform="translate(884.00 445.30) scale(0.971 1)" font-size="7.73">Office_23</text><path d="M869.4 454.75 H878.6" stroke="#40a8c8" stroke-width="1.1"/><text transform="translate(884.00 457.25) scale(0.971 1)" font-size="7.73">Office_24</text><path d="M869.4 466.70 H878.6" stroke="#ff4040" stroke-width="1.1"/><text transform="translate(884.00 469.20) scale(0.971 1)" font-size="7.73">Office_31</text><path d="M869.4 478.65 H878.6" stroke="#c800c8" stroke-width="1.1"/><text transform="translate(884.00 481.15) scale(0.971 1)" font-size="7.73">Office_Guest</text><path d="M869.4 490.60 H878.6" stroke="#ffff40" stroke-width="1.1"/><text transform="translate(884.00 493.10) scale(0.971 1)" font-size="7.73">vladik</text><path d="M869.4 502.55 H878.6" stroke="#ffb400" stroke-width="1.1"/><text transform="translate(884.00 505.05) scale(0.971 1)" font-size="7.73">ZyXEL</text><path d="M869.4 514.50 H878.6" stroke="#c00000" stroke-width="1.1"/><text transform="translate(884.00 517.00) scale(0.971 1)" font-size="7.73">ZyXEL_1BC8</text></svg>
<div class="a" style="left:0.00px;top:770.60px;width:1024.00px;height:1.00px;background:#b9b9b9"></div>
<div class="a" style="left:0.00px;top:771.60px;width:1024.00px;height:14.40px;background:#efedec"></div>
</body></html>
